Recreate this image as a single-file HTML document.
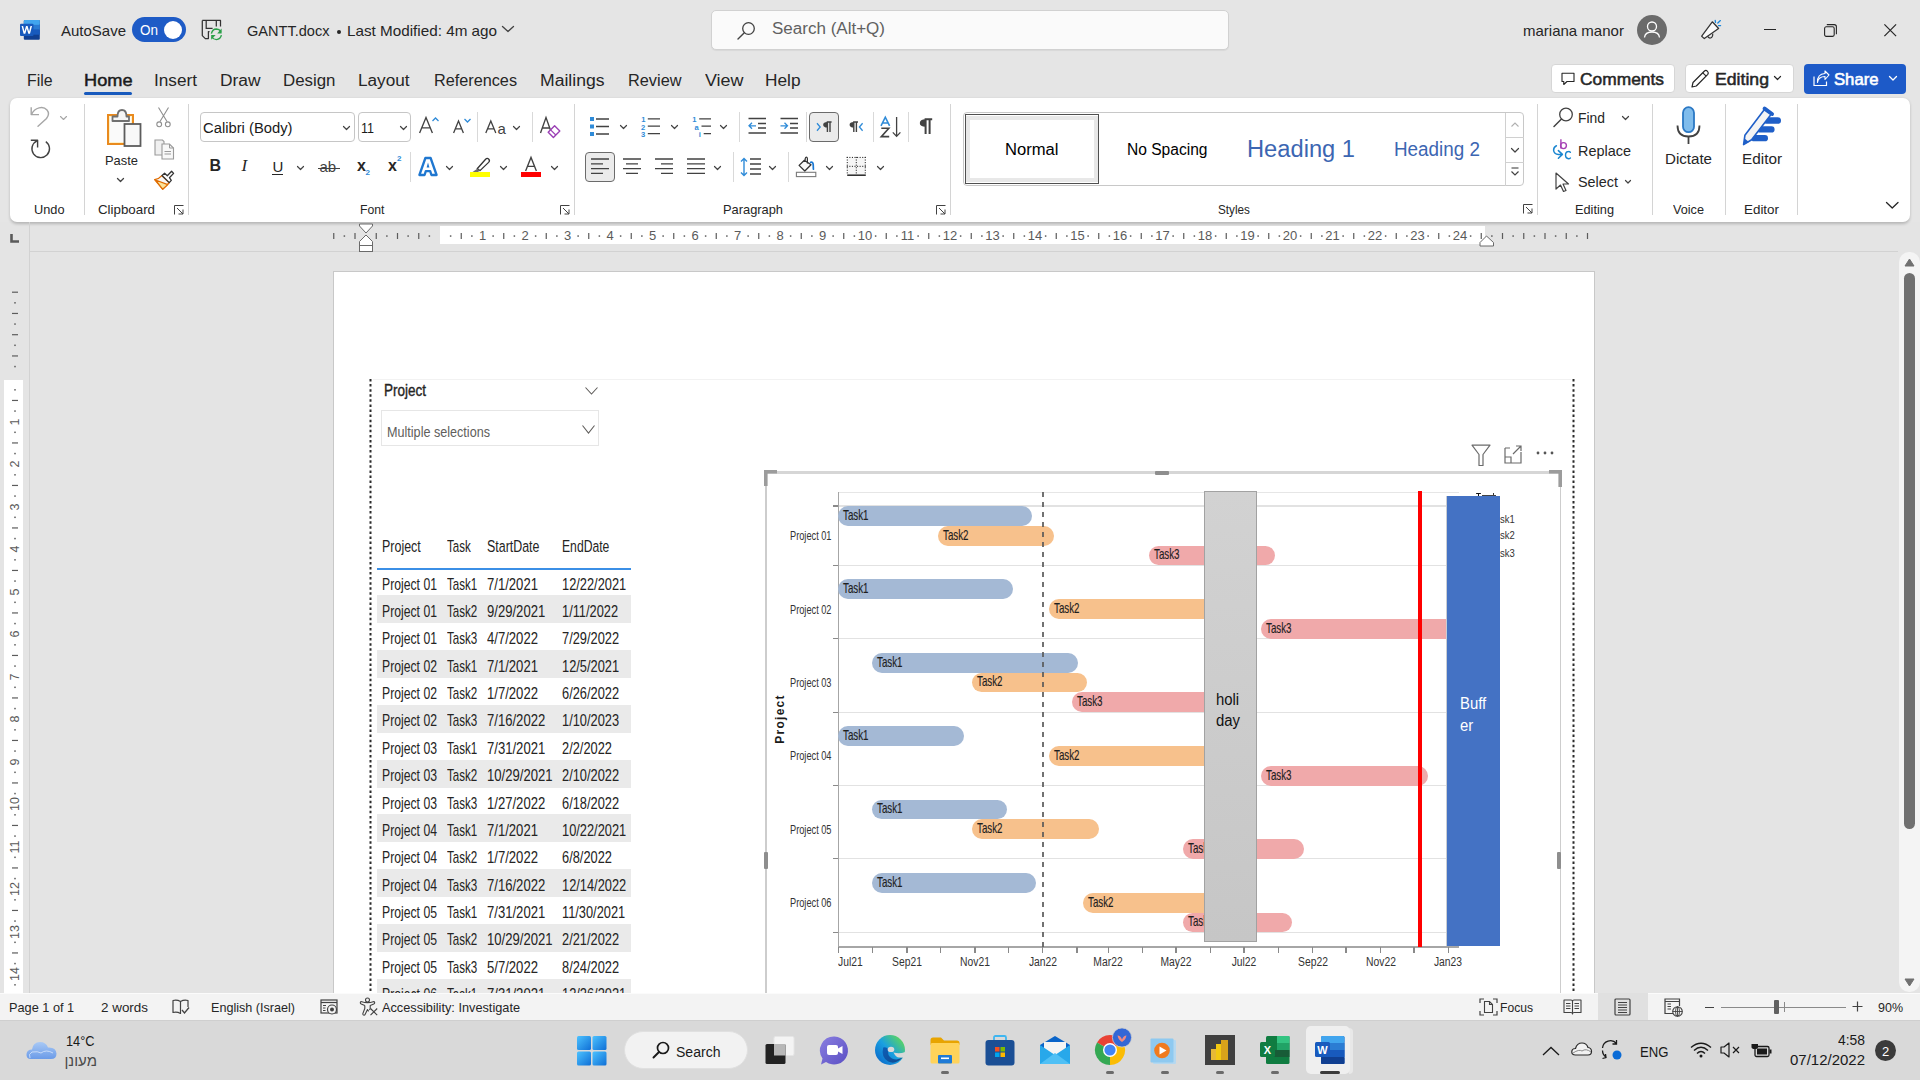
<!DOCTYPE html>
<html><head><meta charset="utf-8"><title>GANTT.docx - Word</title>
<style>
*{margin:0;padding:0;box-sizing:border-box}
html,body{width:1920px;height:1080px;overflow:hidden;background:#e5e5e5;font-family:"Liberation Sans", sans-serif;position:relative}
.t{position:absolute;white-space:nowrap}
.r{position:absolute}
svg.r{overflow:visible}
</style></head><body>
<svg class="r" style="left:16px;top:16px;" width="28" height="28" viewBox="0 0 28 28">
      <rect x="7.8" y="3.9" width="16" height="19.8" rx="1" fill="#103f91"/>
      <rect x="7.8" y="3.9" width="16" height="5" rx="1" fill="#41a5ee"/>
      <rect x="7.8" y="8.8" width="16" height="5" fill="#2b7cd3"/>
      <rect x="7.8" y="13.7" width="16" height="5" fill="#185abd"/>
      <rect x="4" y="7.8" width="13.5" height="12.2" rx="1" fill="#185abd"/>
      <path d="M5.6 10 L7.6 17.8 H9.3 L10.8 12.4 L12.3 17.8 H14 L16 10 H14.5 L13.1 15.6 L11.6 10 H10 L8.5 15.6 L7.1 10 Z" fill="#fff"/></svg>
<svg class="r" style="left:198px;top:16px;" width="28" height="28" viewBox="0 0 28 28">
      <path d="M4.3 4.4 H22.5 V10.6 M4.3 4.4 V19.6 L7.3 22.6 H10.4 V15.6 H11.5" fill="none" stroke="#333" stroke-width="1.25" stroke-linejoin="round"/>
      <path d="M8.2 4.4 V12.3 H14.6 M18.3 4.4 V10.6" fill="none" stroke="#333" stroke-width="1.25"/>
      <path d="M13.4 17.6 Q14.5 13.1 18.4 13 Q21.2 13 23 15.6" fill="none" stroke="#2aa048" stroke-width="1.4"/>
      <path d="M23.6 12.4 V17.6 H19.2 Z" fill="#2aa048"/>
      <path d="M23.4 19.2 Q22.3 23.5 18.4 23.6 Q15.4 23.6 13.8 21" fill="none" stroke="#2aa048" stroke-width="1.4"/>
      <path d="M13.2 23.8 V19.1 H17.6 Z" fill="#2aa048"/></svg>
<div class="t" style="left:61.00px;top:23.30px;font-size:15px;line-height:15px;color:#262626;">AutoSave</div>
<div class="r" style="left:132px;top:17px;width:54px;height:25px;background:#1e5bc6;border-radius:13px;"></div>
<div class="t" style="left:140.00px;top:23.23px;font-size:14.5px;line-height:14.5px;color:#ffffff;transform:scaleX(0.930525601570262);transform-origin:left center;">On</div>
<div class="r" style="left:164px;top:21px;width:18px;height:18px;background:#ffffff;border-radius:50%;"></div>
<div class="t" style="left:247.00px;top:23.30px;font-size:15px;line-height:15px;color:#262626;transform:scaleX(0.9703652653342523);transform-origin:left center;">GANTT.docx</div>
<div class="r" style="left:336.5px;top:29.5px;width:4px;height:4px;background:#262626;border-radius:50%;"></div>
<div class="t" style="left:347.00px;top:23.30px;font-size:15px;line-height:15px;color:#262626;transform:scaleX(1.0163731359875494);transform-origin:left center;">Last Modified: 4m ago</div>
<svg class="r" style="left:502px;top:26px;" width="12" height="6" viewBox="0 0 12 6"><polyline points="0.5,0.5 6.0,5.5 11.5,0.5" fill="none" stroke="#424242" stroke-width="1.3" stroke-linecap="round" stroke-linejoin="round"/></svg>
<div class="r" style="left:711px;top:10px;width:518px;height:40px;background:#fafafa;border:1px solid #d1d1d1;border-radius:5px;box-shadow:0 1px 1px rgba(0,0,0,0.06);"></div>
<svg class="r" style="left:737px;top:21px;" width="19" height="19" viewBox="0 0 19 19"><circle cx="11.5" cy="7.5" r="5.8" fill="none" stroke="#424242" stroke-width="1.3"/><line x1="7.3" y1="11.8" x2="1" y2="18" stroke="#424242" stroke-width="1.4" stroke-linecap="round"/></svg>
<div class="t" style="left:771.50px;top:21.46px;font-size:16px;line-height:16px;color:#616161;transform:scaleX(1.0634293242988895);transform-origin:left center;">Search (Alt+Q)</div>
<div class="t" style="left:1523.00px;top:23.30px;font-size:15px;line-height:15px;color:#262626;">mariana manor</div>
<svg class="r" style="left:1637px;top:15px;" width="30" height="30" viewBox="0 0 30 30"><circle cx="15" cy="15" r="15" fill="#6b6b6b"/><circle cx="15" cy="11.5" r="4.5" fill="none" stroke="#fff" stroke-width="1.3"/><path d="M7.5 22.5 Q8 17 15 17 Q22 17 22.5 22.5" fill="none" stroke="#fff" stroke-width="1.3"/></svg>
<svg class="r" style="left:1695px;top:12px;" width="35" height="35" viewBox="0 0 35 35"><path d="M17.3 9.8 L23.6 16.5 L9.3 26.6 L6.7 24.2 Z" fill="#fafafa" stroke="#333" stroke-width="1.25" stroke-linejoin="round"/><path d="M12.6 24.3 Q13.5 26.3 15.5 26 Q18 25.3 17.7 21.6" fill="none" stroke="#333" stroke-width="1.2"/><path d="M20.2 8.3 L20.5 10.4 M22.8 11 L25.4 8.6 M23.5 13.6 L25.6 13.6" stroke="#1a86d9" stroke-width="1.3" stroke-linecap="round"/></svg>
<div class="r" style="left:1764px;top:29px;width:12px;height:1.2px;background:#262626;"></div>
<svg class="r" style="left:1823.5px;top:23.5px;" width="13" height="13" viewBox="0 0 13 13"><rect x="0.6" y="2.8" width="9.6" height="9.6" rx="1.6" fill="none" stroke="#262626" stroke-width="1.1"/><path d="M2.8 0.6 H10.2 Q12.4 0.6 12.4 2.8 V10.2" fill="none" stroke="#262626" stroke-width="1.1"/></svg>
<svg class="r" style="left:1884px;top:24px;" width="12.5" height="12.5" viewBox="0 0 12.5 12.5"><path d="M0.4 0.4 L12.1 12.1 M12.1 0.4 L0.4 12.1" stroke="#262626" stroke-width="1.2"/></svg>
<div class="t" style="left:27.00px;top:73.46px;font-size:16px;line-height:16px;color:#262626;transform:scaleX(0.9890429554930671);transform-origin:left center;">File</div>
<div class="t" style="left:83.50px;top:73.46px;font-size:16px;line-height:16px;color:#1a1a1a;transform:scaleX(1.1363636363636365);transform-origin:left center;-webkit-text-stroke:0.45px #1a1a1a;">Home</div>
<div class="t" style="left:154.00px;top:73.46px;font-size:16px;line-height:16px;color:#262626;transform:scaleX(1.0745298931717373);transform-origin:left center;">Insert</div>
<div class="t" style="left:219.80px;top:73.46px;font-size:16px;line-height:16px;color:#262626;transform:scaleX(1.0847003682624707);transform-origin:left center;">Draw</div>
<div class="t" style="left:283.00px;top:73.46px;font-size:16px;line-height:16px;color:#262626;transform:scaleX(1.0541110330288124);transform-origin:left center;">Design</div>
<div class="t" style="left:357.50px;top:73.46px;font-size:16px;line-height:16px;color:#262626;transform:scaleX(1.0720233139050792);transform-origin:left center;">Layout</div>
<div class="t" style="left:434.00px;top:73.46px;font-size:16px;line-height:16px;color:#262626;transform:scaleX(1.014390907146567);transform-origin:left center;">References</div>
<div class="t" style="left:539.50px;top:73.46px;font-size:16px;line-height:16px;color:#262626;transform:scaleX(1.099041533546326);transform-origin:left center;">Mailings</div>
<div class="t" style="left:627.50px;top:73.46px;font-size:16px;line-height:16px;color:#262626;transform:scaleX(1.0197760304979748);transform-origin:left center;">Review</div>
<div class="t" style="left:704.50px;top:73.46px;font-size:16px;line-height:16px;color:#262626;transform:scaleX(1.1194301083084977);transform-origin:left center;">View</div>
<div class="t" style="left:764.50px;top:73.46px;font-size:16px;line-height:16px;color:#262626;transform:scaleX(1.0787814328040721);transform-origin:left center;">Help</div>
<div class="r" style="left:84px;top:92px;width:48px;height:3px;background:#185abd;border-radius:2px;"></div>
<div class="r" style="left:1551px;top:64px;width:124px;height:29px;background:#ffffff;border:1px solid #d6d6d6;border-radius:4px;"></div>
<svg class="r" style="left:1561px;top:72px;" width="14" height="14" viewBox="0 0 14 14"><path d="M1 1.2 H13 V9.5 H6 L2.8 12.5 V9.5 H1 Z" fill="none" stroke="#262626" stroke-width="1.1" stroke-linejoin="round"/></svg>
<div class="t" style="left:1579.50px;top:71.03px;font-size:16.5px;line-height:16.5px;color:#262626;transform:scaleX(1.0530305478755755);transform-origin:left center;-webkit-text-stroke:0.5px #262626;">Comments</div>
<div class="r" style="left:1685px;top:64px;width:109px;height:29px;background:#ffffff;border:1px solid #d6d6d6;border-radius:4px;"></div>
<svg class="r" style="left:1690px;top:69px;" width="20" height="20" viewBox="0 0 20 20"><path d="M2 18 L3 13.5 L14.5 2 Q16 0.8 17.5 2.3 Q19 3.8 17.8 5.3 L6.3 17 Z" fill="none" stroke="#262626" stroke-width="1.2" stroke-linejoin="round"/><path d="M12.8 3.8 L16.2 7.2" stroke="#262626" stroke-width="1.1"/></svg>
<div class="t" style="left:1714.50px;top:71.03px;font-size:16.5px;line-height:16.5px;color:#262626;transform:scaleX(1.0703385224311177);transform-origin:left center;-webkit-text-stroke:0.5px #262626;">Editing</div>
<svg class="r" style="left:1774px;top:76px;" width="7" height="4" viewBox="0 0 7 4"><polyline points="0.5,0.5 3.5,3.5 6.5,0.5" fill="none" stroke="#262626" stroke-width="1.2" stroke-linecap="round" stroke-linejoin="round"/></svg>
<div class="r" style="left:1804px;top:64px;width:102px;height:30px;background:#1d5ac8;border-radius:4px;"></div>
<svg class="r" style="left:1813px;top:70px;" width="16" height="17" viewBox="0 0 16 17"><path d="M1 6.5 V15.5 H13.5 V11.5" fill="none" stroke="#fff" stroke-width="1.2"/><path d="M4.5 12.5 Q5.5 6.5 12 6.5 V9.5 L16 5 L12 1 V3.5 Q4 4 4.5 12.5 Z" fill="none" stroke="#fff" stroke-width="1.1" stroke-linejoin="round"/></svg>
<div class="t" style="left:1834.00px;top:71.03px;font-size:16.5px;line-height:16.5px;color:#ffffff;transform:scaleX(1.0106332958958992);transform-origin:left center;-webkit-text-stroke:0.6px #ffffff;">Share</div>
<svg class="r" style="left:1889px;top:76px;" width="8" height="4.5" viewBox="0 0 8 4.5"><polyline points="0.5,0.5 4.0,4.0 7.5,0.5" fill="none" stroke="#ffffff" stroke-width="1.3" stroke-linecap="round" stroke-linejoin="round"/></svg>
<div class="r" style="left:0px;top:222px;width:1920px;height:771px;background:#e4e4e4;"></div>
<div class="r" style="left:10px;top:98px;width:1900px;height:124px;background:#ffffff;border-radius:7px;box-shadow:0 1.5px 3px rgba(0,0,0,0.2);"></div>
<div class="r" style="left:84.1px;top:104px;width:1px;height:111px;background:#d4d4d4;"></div>
<div class="r" style="left:188.0px;top:104px;width:1px;height:111px;background:#d4d4d4;"></div>
<div class="r" style="left:574.0px;top:104px;width:1px;height:111px;background:#d4d4d4;"></div>
<div class="r" style="left:950.0px;top:104px;width:1px;height:111px;background:#d4d4d4;"></div>
<div class="r" style="left:1537.0px;top:104px;width:1px;height:111px;background:#d4d4d4;"></div>
<div class="r" style="left:1651.9px;top:104px;width:1px;height:111px;background:#d4d4d4;"></div>
<div class="r" style="left:1725.0px;top:104px;width:1px;height:111px;background:#d4d4d4;"></div>
<div class="r" style="left:1797.3px;top:104px;width:1px;height:111px;background:#d4d4d4;"></div>
<div class="t" style="left:33.50px;top:203.00px;font-size:13px;line-height:13px;color:#262626;transform:scaleX(0.9813976872800402);transform-origin:left center;">Undo</div>
<div class="t" style="left:97.50px;top:203.00px;font-size:13px;line-height:13px;color:#262626;transform:scaleX(1.0243680536445376);transform-origin:left center;">Clipboard</div>
<div class="t" style="left:359.50px;top:203.00px;font-size:13px;line-height:13px;color:#262626;transform:scaleX(0.941792649452523);transform-origin:left center;">Font</div>
<div class="t" style="left:722.50px;top:203.00px;font-size:13px;line-height:13px;color:#262626;transform:scaleX(0.9883050568275408);transform-origin:left center;">Paragraph</div>
<div class="t" style="left:1217.50px;top:203.00px;font-size:13px;line-height:13px;color:#262626;transform:scaleX(0.9010623320107539);transform-origin:left center;">Styles</div>
<div class="t" style="left:1575.00px;top:203.00px;font-size:13px;line-height:13px;color:#262626;transform:scaleX(0.9811436455618581);transform-origin:left center;">Editing</div>
<div class="t" style="left:1673.00px;top:203.00px;font-size:13px;line-height:13px;color:#262626;transform:scaleX(0.9747421895342953);transform-origin:left center;">Voice</div>
<div class="t" style="left:1744.00px;top:203.00px;font-size:13px;line-height:13px;color:#262626;transform:scaleX(1.030610038325811);transform-origin:left center;">Editor</div>
<svg class="r" style="left:174px;top:205px;" width="10" height="10" viewBox="0 0 10 10"><path d="M0.5 9.5 V0.5 H9.5" fill="none" stroke="#424242" stroke-width="1"/><path d="M3 3 L9 9 M9 4.5 V9 H4.5" fill="none" stroke="#424242" stroke-width="1"/></svg>
<svg class="r" style="left:560px;top:205px;" width="10" height="10" viewBox="0 0 10 10"><path d="M0.5 9.5 V0.5 H9.5" fill="none" stroke="#424242" stroke-width="1"/><path d="M3 3 L9 9 M9 4.5 V9 H4.5" fill="none" stroke="#424242" stroke-width="1"/></svg>
<svg class="r" style="left:936px;top:205px;" width="10" height="10" viewBox="0 0 10 10"><path d="M0.5 9.5 V0.5 H9.5" fill="none" stroke="#424242" stroke-width="1"/><path d="M3 3 L9 9 M9 4.5 V9 H4.5" fill="none" stroke="#424242" stroke-width="1"/></svg>
<svg class="r" style="left:1523px;top:204px;" width="10" height="10" viewBox="0 0 10 10"><path d="M0.5 9.5 V0.5 H9.5" fill="none" stroke="#424242" stroke-width="1"/><path d="M3 3 L9 9 M9 4.5 V9 H4.5" fill="none" stroke="#424242" stroke-width="1"/></svg>
<svg class="r" style="left:1885.5px;top:201.5px;" width="12.5" height="6.5" viewBox="0 0 12.5 6.5"><polyline points="0.5,0.5 6.25,6.0 12.0,0.5" fill="none" stroke="#262626" stroke-width="1.3" stroke-linecap="round" stroke-linejoin="round"/></svg>
<svg class="r" style="left:30px;top:106px;" width="20" height="21" viewBox="0 0 20 21"><path d="M1.2 1.2 V8.6 H9" fill="none" stroke="#a6a6a6" stroke-width="1.4" stroke-linejoin="round"/><path d="M1.6 8.2 C5 1.5 13 -0.5 17 4 C19.5 7 18.5 10 16.5 12.5 L8 20.3" fill="none" stroke="#a6a6a6" stroke-width="1.4" stroke-linecap="round"/></svg>
<svg class="r" style="left:60px;top:116px;" width="7" height="4" viewBox="0 0 7 4"><polyline points="0.5,0.5 3.5,3.5 6.5,0.5" fill="none" stroke="#a6a6a6" stroke-width="1.1" stroke-linecap="round" stroke-linejoin="round"/></svg>
<svg class="r" style="left:30px;top:139px;" width="21" height="21" viewBox="0 0 21 21"><path d="M0.8 1.2 H7.6 V8.6" fill="none" stroke="#424242" stroke-width="1.4" stroke-linejoin="round"/><path d="M7 1.8 A8.8 8.8 0 1 0 15.8 2.6" fill="none" stroke="#424242" stroke-width="1.4"/></svg>
<svg class="r" style="left:107px;top:107px;" width="35" height="40" viewBox="0 0 35 40">
      <rect x="1" y="8" width="25" height="29" fill="#fdf0c8" stroke="#e98a1e" stroke-width="2"/>
      <rect x="3" y="10" width="21" height="25" fill="#fafafa"/>
      <path d="M5.5 14 V9.5 H10.5 Q10.5 3 15 3 Q19.5 3 19.5 9.5 H22 V14 Z" fill="#f5f5f5" stroke="#707070" stroke-width="1.8" stroke-linejoin="round"/>
      <rect x="17.5" y="17" width="16" height="22" fill="#f8f8f8" stroke="#5c5c5c" stroke-width="1.8"/></svg>
<div class="t" style="left:104.50px;top:153.57px;font-size:13.5px;line-height:13.5px;color:#262626;transform:scaleX(0.9559113066384239);transform-origin:left center;">Paste</div>
<svg class="r" style="left:117px;top:178px;" width="7" height="4" viewBox="0 0 7 4"><polyline points="0.5,0.5 3.5,3.5 6.5,0.5" fill="none" stroke="#424242" stroke-width="1.3" stroke-linecap="round" stroke-linejoin="round"/></svg>
<svg class="r" style="left:156px;top:107px;" width="15" height="21" viewBox="0 0 15 21"><path d="M2.5 0.5 L11 14.5 M12.5 0.5 L4 14.5" stroke="#8f8f8f" stroke-width="1.1"/><circle cx="3.2" cy="17.3" r="2.4" fill="none" stroke="#8f8f8f" stroke-width="1.1"/><circle cx="11.8" cy="17.3" r="2.4" fill="none" stroke="#8f8f8f" stroke-width="1.1"/></svg>
<svg class="r" style="left:154px;top:139px;" width="21" height="21" viewBox="0 0 21 21"><path d="M1 1 H8.5 L10 2.5 V16 H1 Z" fill="#f0f0f0" stroke="#9a9a9a" stroke-width="1.1"/><path d="M8 5 H15.5 L19.5 9 V20 H8 Z" fill="#f8f8f8" stroke="#9a9a9a" stroke-width="1.1"/><path d="M15.5 5 V9 H19.5" fill="none" stroke="#9a9a9a" stroke-width="1"/><path d="M10.5 12.5 H17 M10.5 15 H17" stroke="#9a9a9a" stroke-width="1"/></svg>
<svg class="r" style="left:150px;top:166px;" width="30" height="30" viewBox="0 0 30 30"><path d="M11.8 9.6 Q9 13 4.6 13.7 L12.6 23.2 L19.2 16.8 Z" fill="#f8f8f8" stroke="#e06c00" stroke-width="1.3" stroke-linejoin="round"/><path d="M5.5 14 L17.8 18.6 L12.6 23.2 Z" fill="#fbe39b" stroke="#e06c00" stroke-width="1.2" stroke-linejoin="round"/><path d="M12 9.5 L14.6 7.3 L17.3 9.7 L21.6 5.3 L23.6 7.4 L19.4 11.7 L21.3 14.4 L19.3 16.6 Z" fill="#fff" stroke="#333" stroke-width="1.3" stroke-linejoin="round"/></svg>
<div class="r" style="left:199.6px;top:112.2px;width:155px;height:29.5px;background:#ffffff;border:1px solid #c6c6c6;border-radius:4px;"></div>
<div class="t" style="left:202.50px;top:119.88px;font-size:15.5px;line-height:15.5px;color:#1a1a1a;transform:scaleX(0.9532796447835067);transform-origin:left center;">Calibri (Body)</div>
<svg class="r" style="left:343px;top:126px;" width="7" height="4" viewBox="0 0 7 4"><polyline points="0.5,0.5 3.5,3.5 6.5,0.5" fill="none" stroke="#424242" stroke-width="1.2" stroke-linecap="round" stroke-linejoin="round"/></svg>
<div class="r" style="left:357.5px;top:112.2px;width:53px;height:29.5px;background:#ffffff;border:1px solid #c6c6c6;border-radius:4px;"></div>
<div class="t" style="left:361.00px;top:119.88px;font-size:15.5px;line-height:15.5px;color:#1a1a1a;transform:scaleX(0.8079081781282166);transform-origin:left center;">11</div>
<svg class="r" style="left:400px;top:126px;" width="7" height="4" viewBox="0 0 7 4"><polyline points="0.5,0.5 3.5,3.5 6.5,0.5" fill="none" stroke="#424242" stroke-width="1.2" stroke-linecap="round" stroke-linejoin="round"/></svg>
<svg class="r" style="left:410px;top:108px;" width="160" height="74" viewBox="0 0 160 74"><path d="M9.6 25 L16 9.6 L22.4 25 M11.8 19.9 H20.2" fill="none" stroke="#424242" stroke-width="1.35"/><path d="M43.6 25 L48.5 13 L53.4 25 M45.3 20.8 H51.7" fill="none" stroke="#424242" stroke-width="1.3"/><path d="M75.8 25 L80.8 13 L85.8 25 M77.5 20.8 H84.1" fill="none" stroke="#424242" stroke-width="1.3"/><path d="M130.5 25 L136 9.6 L141.5 25 M132.4 20 H139.6" fill="none" stroke="#424242" stroke-width="1.35"/><path d="M115.6 63 L121 49.4 L126.4 63 M117.5 58.3 H124.5" fill="none" stroke="#424242" stroke-width="1.35"/><path d="M9.4 67 L15.4 50 H20.6 L26.6 67 H21.4 L20.2 63.2 H15.8 L14.6 67 Z" fill="#fff" stroke="#1f77d0" stroke-width="2.3" stroke-linejoin="round"/><path d="M16.6 59.6 L18 54.6 L19.4 59.6 Z" fill="#1f77d0"/></svg>
<svg class="r" style="left:432px;top:117px;" width="7" height="5" viewBox="0 0 7 5"><polyline points="0.5,4 3.5,1 6.5,4" fill="none" stroke="#2f8bd8" stroke-width="1.3"/></svg>
<svg class="r" style="left:464px;top:118px;" width="7" height="5" viewBox="0 0 7 5"><polyline points="0.5,1 3.5,4 6.5,1" fill="none" stroke="#2f8bd8" stroke-width="1.3"/></svg>
<div class="r" style="left:477.2px;top:112px;width:1px;height:30px;background:#d9d9d9;"></div>
<div class="t" style="left:497.50px;top:120.60px;font-size:15px;line-height:15px;color:#424242;">a</div>
<svg class="r" style="left:513px;top:126px;" width="7" height="4" viewBox="0 0 7 4"><polyline points="0.5,0.5 3.5,3.5 6.5,0.5" fill="none" stroke="#424242" stroke-width="1.2" stroke-linecap="round" stroke-linejoin="round"/></svg>
<div class="r" style="left:532.0px;top:112px;width:1px;height:30px;background:#d9d9d9;"></div>
<svg class="r" style="left:547px;top:124px;" width="14" height="14" viewBox="0 0 14 14"><path d="M1.2 8.2 L7.6 1.8 L12.8 7 L6.4 13.4 Z" fill="#fff" stroke="#9b3fb5" stroke-width="1.4" stroke-linejoin="round"/><path d="M3.6 5.8 L8.8 11" stroke="#9b3fb5" stroke-width="1.2"/></svg>
<div class="t" style="left:209.50px;top:157.96px;font-size:16px;line-height:16px;color:#262626;font-weight:700;">B</div>
<div class="t" style="left:241.50px;top:157.11px;font-size:17px;line-height:17px;color:#262626;font-family:'Liberation Serif', serif;font-style:italic;">I</div>
<div class="t" style="left:272.50px;top:158.80px;font-size:15px;line-height:15px;color:#262626;">U</div>
<div class="r" style="left:272px;top:174px;width:11px;height:1.3px;background:#262626;"></div>
<svg class="r" style="left:297px;top:166px;" width="7" height="4" viewBox="0 0 7 4"><polyline points="0.5,0.5 3.5,3.5 6.5,0.5" fill="none" stroke="#424242" stroke-width="1.2" stroke-linecap="round" stroke-linejoin="round"/></svg>
<div class="t" style="left:319.50px;top:158.80px;font-size:15px;line-height:15px;color:#424242;">ab</div>
<div class="r" style="left:318px;top:167.5px;width:22px;height:1.1px;background:#424242;"></div>
<div class="t" style="left:357.00px;top:157.96px;font-size:16px;line-height:16px;color:#262626;font-weight:700;">x</div>
<div class="t" style="left:365.50px;top:169.23px;font-size:8px;line-height:8px;color:#2f8bd8;font-weight:700;">2</div>
<div class="t" style="left:388.00px;top:157.96px;font-size:16px;line-height:16px;color:#262626;font-weight:700;">x</div>
<div class="t" style="left:397.00px;top:155.23px;font-size:8px;line-height:8px;color:#2f8bd8;font-weight:700;">2</div>
<div class="r" style="left:410.0px;top:152px;width:1px;height:30px;background:#d9d9d9;"></div>
<svg class="r" style="left:446px;top:166px;" width="7" height="4" viewBox="0 0 7 4"><polyline points="0.5,0.5 3.5,3.5 6.5,0.5" fill="none" stroke="#424242" stroke-width="1.2" stroke-linecap="round" stroke-linejoin="round"/></svg>
<svg class="r" style="left:470px;top:156px;" width="21" height="22" viewBox="0 0 21 22"><path d="M7.2 12.8 L15.6 3.2 Q17.2 1.6 18.8 3.2 Q20.2 4.8 18.6 6.4 L10 14.6 Z" fill="#fff" stroke="#333" stroke-width="1.3" stroke-linejoin="round"/><path d="M7.2 12.8 L10 14.6 L8 16 L2.2 16.3 Z" fill="#6e6e6e"/><rect x="0" y="16" width="20" height="5" fill="#ffff00"/></svg>
<svg class="r" style="left:500px;top:166px;" width="7" height="4" viewBox="0 0 7 4"><polyline points="0.5,0.5 3.5,3.5 6.5,0.5" fill="none" stroke="#424242" stroke-width="1.2" stroke-linecap="round" stroke-linejoin="round"/></svg>
<div class="r" style="left:521px;top:172px;width:20px;height:5px;background:#ff0000;"></div>
<svg class="r" style="left:551px;top:166px;" width="7" height="4" viewBox="0 0 7 4"><polyline points="0.5,0.5 3.5,3.5 6.5,0.5" fill="none" stroke="#424242" stroke-width="1.2" stroke-linecap="round" stroke-linejoin="round"/></svg>
<svg class="r" style="left:589px;top:116px;" width="22" height="20" viewBox="0 0 22 20"><rect x="1" y="1" width="4" height="4" fill="#2f8bd8"/><rect x="1" y="8.5" width="4" height="4" fill="#2f8bd8"/><rect x="1" y="16" width="4" height="4" fill="#2f8bd8"/><path d="M7 3 H20 M7 10.5 H20 M7 18 H20" stroke="#424242" stroke-width="1.3"/></svg>
<svg class="r" style="left:620px;top:125px;" width="7" height="4" viewBox="0 0 7 4"><polyline points="0.5,0.5 3.5,3.5 6.5,0.5" fill="none" stroke="#424242" stroke-width="1.2" stroke-linecap="round" stroke-linejoin="round"/></svg>
<svg class="r" style="left:640px;top:115px;" width="22" height="22" viewBox="0 0 22 22"><text x="1.3" y="7.3" font-size="7.6" font-weight="700" fill="#2f8bd8" font-family="Liberation Sans">1</text><text x="1" y="14.8" font-size="7.6" font-weight="700" fill="#2f8bd8" font-family="Liberation Sans">2</text><text x="1" y="22.3" font-size="7.6" font-weight="700" fill="#2f8bd8" font-family="Liberation Sans">3</text><path d="M7.8 3.8 H20 M7.8 11.2 H20 M7.8 18.6 H20" stroke="#424242" stroke-width="1.3"/></svg>
<svg class="r" style="left:671px;top:125px;" width="7" height="4" viewBox="0 0 7 4"><polyline points="0.5,0.5 3.5,3.5 6.5,0.5" fill="none" stroke="#424242" stroke-width="1.2" stroke-linecap="round" stroke-linejoin="round"/></svg>
<svg class="r" style="left:691px;top:115px;" width="22" height="22" viewBox="0 0 22 22"><text x="1.2" y="7.3" font-size="7.6" font-weight="700" fill="#2f8bd8" font-family="Liberation Sans">1</text><text x="3.6" y="14.8" font-size="7.6" font-weight="700" fill="#2f8bd8" font-family="Liberation Sans">a</text><text x="7.8" y="22.3" font-size="7.6" font-weight="700" fill="#2f8bd8" font-family="Liberation Sans">i</text><path d="M8.2 3.8 H20 M10.5 11.2 H20 M12.7 18.6 H20" stroke="#424242" stroke-width="1.3"/></svg>
<svg class="r" style="left:720px;top:125px;" width="7" height="4" viewBox="0 0 7 4"><polyline points="0.5,0.5 3.5,3.5 6.5,0.5" fill="none" stroke="#424242" stroke-width="1.2" stroke-linecap="round" stroke-linejoin="round"/></svg>
<div class="r" style="left:739.0px;top:112px;width:1px;height:30px;background:#d9d9d9;"></div>
<svg class="r" style="left:748px;top:117px;" width="19" height="18" viewBox="0 0 19 18"><path d="M0.5 1.5 H18 M10 6.5 H18 M10 11 H18 M0.5 16 H18" stroke="#424242" stroke-width="1.3"/><path d="M8 8.8 H1 M4 5.8 L1 8.8 L4 11.8" fill="none" stroke="#2f8bd8" stroke-width="1.3"/></svg>
<svg class="r" style="left:780px;top:117px;" width="19" height="18" viewBox="0 0 19 18"><path d="M0.5 1.5 H18 M10 6.5 H18 M10 11 H18 M0.5 16 H18" stroke="#424242" stroke-width="1.3"/><path d="M0.5 8.8 H7.5 M4.5 5.8 L7.5 8.8 L4.5 11.8" fill="none" stroke="#2f8bd8" stroke-width="1.3"/></svg>
<div class="r" style="left:806.0px;top:112px;width:1px;height:30px;background:#d9d9d9;"></div>
<div class="r" style="left:809px;top:112px;width:30px;height:30px;background:#ebebeb;border:1px solid #6b6b6b;border-radius:4px;"></div>
<svg class="r" style="left:740px;top:108px;" width="200" height="34" viewBox="0 0 200 34"><path d="M77 15.3 L80.2 19 L77 22.7" fill="none" stroke="#2f8bd8" stroke-width="1.3"/><path d="M87.4 24 V14 H91.6 M90 14 V24" fill="none" stroke="#424242" stroke-width="1.4"/><path d="M87.4 14 Q83.2 14 83.2 16.8 Q83.2 19.6 87.4 19.6 Z" fill="#424242"/><path d="M113.8 24 V14 H118 M116.4 14 V24" fill="none" stroke="#424242" stroke-width="1.4"/><path d="M113.8 14 Q109.6 14 109.6 16.8 Q109.6 19.6 113.8 19.6 Z" fill="#424242"/><path d="M122.6 15.3 L119.4 19 L122.6 22.7" fill="none" stroke="#2f8bd8" stroke-width="1.3"/><path d="M141 17.8 L145.3 9.2 L149.6 17.8 M142.5 15 H148.1" fill="none" stroke="#2f8bd8" stroke-width="1.6"/><path d="M141.3 20.3 H148.8 L141.3 28.6 H149.2" fill="none" stroke="#424242" stroke-width="1.6"/><path d="M156.6 9 V28.4 M152.8 24.4 L156.6 28.4 L160.4 24.4" fill="none" stroke="#424242" stroke-width="1.3"/><path d="M185.6 26 V11.2 H192.2 M189.6 11.2 V26" fill="none" stroke="#424242" stroke-width="2"/><path d="M185.6 11.2 Q179.8 11.2 179.8 15 Q179.8 18.8 185.6 18.8 Z" fill="#424242"/></svg>
<div class="r" style="left:873.0px;top:112px;width:1px;height:30px;background:#d9d9d9;"></div>
<div class="r" style="left:908.0px;top:112px;width:1px;height:30px;background:#d9d9d9;"></div>
<div class="r" style="left:585px;top:152px;width:29.5px;height:29.5px;background:#ebebeb;border:1px solid #6b6b6b;border-radius:4px;"></div>
<svg class="r" style="left:590px;top:157px;" width="20" height="20" viewBox="0 0 20 20"><path d="M1 2 H19 M1 6.8 H13 M1 11.6 H19 M1 16.4 H13" stroke="#424242" stroke-width="1.3"/></svg>
<svg class="r" style="left:622px;top:157px;" width="20" height="20" viewBox="0 0 20 20"><path d="M1 2 H19 M4 6.8 H16 M1 11.6 H19 M4 16.4 H16" stroke="#424242" stroke-width="1.3"/></svg>
<svg class="r" style="left:654px;top:157px;" width="20" height="20" viewBox="0 0 20 20"><path d="M1 2 H19 M7 6.8 H19 M1 11.6 H19 M7 16.4 H19" stroke="#424242" stroke-width="1.3"/></svg>
<svg class="r" style="left:686px;top:157px;" width="20" height="20" viewBox="0 0 20 20"><path d="M1 2 H19 M1 6.8 H19 M1 11.6 H19 M1 16.4 H19" stroke="#424242" stroke-width="1.3"/></svg>
<svg class="r" style="left:714px;top:166px;" width="7" height="4" viewBox="0 0 7 4"><polyline points="0.5,0.5 3.5,3.5 6.5,0.5" fill="none" stroke="#424242" stroke-width="1.2" stroke-linecap="round" stroke-linejoin="round"/></svg>
<div class="r" style="left:733.0px;top:152px;width:1px;height:30px;background:#d9d9d9;"></div>
<svg class="r" style="left:740px;top:157px;" width="22" height="20" viewBox="0 0 22 20"><path d="M4 1.5 V18.5 M1 4.5 L4 1.5 L7 4.5 M1 15.5 L4 18.5 L7 15.5" fill="none" stroke="#2f8bd8" stroke-width="1.4"/><path d="M10 2 H21 M10 7 H21 M10 12 H21 M10 17 H21" stroke="#424242" stroke-width="1.3"/></svg>
<svg class="r" style="left:769px;top:166px;" width="7" height="4" viewBox="0 0 7 4"><polyline points="0.5,0.5 3.5,3.5 6.5,0.5" fill="none" stroke="#424242" stroke-width="1.2" stroke-linecap="round" stroke-linejoin="round"/></svg>
<div class="r" style="left:788.2px;top:152px;width:1px;height:30px;background:#d9d9d9;"></div>
<svg class="r" style="left:790px;top:150px;" width="30" height="30" viewBox="0 0 30 30"><path d="M14.4 10.2 L9.1 15.4 L14.8 21 L21 14.8 Z" fill="#f8f8f8" stroke="#333" stroke-width="1.3" stroke-linejoin="round"/><path d="M17.4 13.6 V8.6 Q17.2 7.2 16.4 7.2 Q15.6 7.2 15.2 8.6 V10.2" fill="none" stroke="#333" stroke-width="1.2"/><path d="M20.6 12.4 Q22.8 11.6 23.2 14.4 L23.4 19.2" fill="none" stroke="#1a78d2" stroke-width="1.7" stroke-linecap="round"/><rect x="6.4" y="22.3" width="19.4" height="4.3" fill="#fff" stroke="#7a7a7a" stroke-width="1.1"/></svg>
<svg class="r" style="left:826px;top:166px;" width="7" height="4" viewBox="0 0 7 4"><polyline points="0.5,0.5 3.5,3.5 6.5,0.5" fill="none" stroke="#424242" stroke-width="1.2" stroke-linecap="round" stroke-linejoin="round"/></svg>
<svg class="r" style="left:790px;top:150px;" width="90" height="30" viewBox="0 0 90 30"><rect x="58" y="8" width="17" height="16" fill="#f6f6f6"/><rect x="56.75" y="6.9" width="1.1" height="1.1" fill="#333"/><rect x="56.75" y="15.8" width="1.1" height="1.1" fill="#333"/><rect x="59.32" y="6.9" width="1.1" height="1.1" fill="#333"/><rect x="59.32" y="15.8" width="1.1" height="1.1" fill="#333"/><rect x="61.89" y="6.9" width="1.1" height="1.1" fill="#333"/><rect x="61.89" y="15.8" width="1.1" height="1.1" fill="#333"/><rect x="64.46" y="6.9" width="1.1" height="1.1" fill="#333"/><rect x="64.46" y="15.8" width="1.1" height="1.1" fill="#333"/><rect x="67.03" y="6.9" width="1.1" height="1.1" fill="#333"/><rect x="67.03" y="15.8" width="1.1" height="1.1" fill="#333"/><rect x="69.60" y="6.9" width="1.1" height="1.1" fill="#333"/><rect x="69.60" y="15.8" width="1.1" height="1.1" fill="#333"/><rect x="72.17" y="6.9" width="1.1" height="1.1" fill="#333"/><rect x="72.17" y="15.8" width="1.1" height="1.1" fill="#333"/><rect x="74.74" y="6.9" width="1.1" height="1.1" fill="#333"/><rect x="74.74" y="15.8" width="1.1" height="1.1" fill="#333"/><rect x="56.75" y="6.90" width="1.1" height="1.1" fill="#333"/><rect x="65.75" y="6.90" width="1.1" height="1.1" fill="#333"/><rect x="74.75" y="6.90" width="1.1" height="1.1" fill="#333"/><rect x="56.75" y="9.47" width="1.1" height="1.1" fill="#333"/><rect x="65.75" y="9.47" width="1.1" height="1.1" fill="#333"/><rect x="74.75" y="9.47" width="1.1" height="1.1" fill="#333"/><rect x="56.75" y="12.04" width="1.1" height="1.1" fill="#333"/><rect x="65.75" y="12.04" width="1.1" height="1.1" fill="#333"/><rect x="74.75" y="12.04" width="1.1" height="1.1" fill="#333"/><rect x="56.75" y="14.61" width="1.1" height="1.1" fill="#333"/><rect x="65.75" y="14.61" width="1.1" height="1.1" fill="#333"/><rect x="74.75" y="14.61" width="1.1" height="1.1" fill="#333"/><rect x="56.75" y="17.18" width="1.1" height="1.1" fill="#333"/><rect x="65.75" y="17.18" width="1.1" height="1.1" fill="#333"/><rect x="74.75" y="17.18" width="1.1" height="1.1" fill="#333"/><rect x="56.75" y="19.75" width="1.1" height="1.1" fill="#333"/><rect x="65.75" y="19.75" width="1.1" height="1.1" fill="#333"/><rect x="74.75" y="19.75" width="1.1" height="1.1" fill="#333"/><rect x="56.75" y="22.32" width="1.1" height="1.1" fill="#333"/><rect x="65.75" y="22.32" width="1.1" height="1.1" fill="#333"/><rect x="74.75" y="22.32" width="1.1" height="1.1" fill="#333"/><rect x="57.2" y="24.4" width="18.6" height="1.6" fill="#333"/></svg>
<svg class="r" style="left:877px;top:166px;" width="7" height="4" viewBox="0 0 7 4"><polyline points="0.5,0.5 3.5,3.5 6.5,0.5" fill="none" stroke="#424242" stroke-width="1.2" stroke-linecap="round" stroke-linejoin="round"/></svg>
<div class="r" style="left:963.3px;top:112.2px;width:560.5px;height:74px;background:#ffffff;border:1px solid #c8c8c8;border-radius:4px;"></div>
<div class="r" style="left:964.5px;top:114.3px;width:134.5px;height:69.5px;background:#ffffff;border:1.5px solid #505050;"></div>
<div class="r" style="left:966px;top:115.8px;width:131.5px;height:66.5px;background:transparent;border:4px solid #e8e8e8;"></div>
<div class="t" style="left:1004.50px;top:142.46px;font-size:16px;line-height:16px;color:#000000;transform:scaleX(1.0375757575757576);transform-origin:left center;">Normal</div>
<div class="t" style="left:1126.50px;top:142.46px;font-size:16px;line-height:16px;color:#000000;transform:scaleX(0.9731624758220503);transform-origin:left center;">No Spacing</div>
<div class="t" style="left:1247.00px;top:137.83px;font-size:23px;line-height:23px;color:#3c66b2;transform:scaleX(1.0299247374153837);transform-origin:left center;font-weight:300;">Heading 1</div>
<div class="t" style="left:1393.50px;top:139.79px;font-size:19.5px;line-height:19.5px;color:#3c66b2;transform:scaleX(0.967327222510745);transform-origin:left center;">Heading 2</div>
<div class="r" style="left:1505.0px;top:113px;width:1px;height:73px;background:#d0d0d0;"></div>
<div class="r" style="left:1505.5px;top:137.3px;width:18px;height:1px;background:#d0d0d0;"></div>
<div class="r" style="left:1505.5px;top:162.3px;width:18px;height:1px;background:#d0d0d0;"></div>
<svg class="r" style="left:1511px;top:122px;" width="8" height="5" viewBox="0 0 8 5"><polyline points="0.5,4.5 4,1 7.5,4.5" fill="none" stroke="#b0b0b0" stroke-width="1.1"/></svg>
<svg class="r" style="left:1511px;top:148px;" width="8" height="4.5" viewBox="0 0 8 4.5"><polyline points="0.5,0.5 4.0,4.0 7.5,0.5" fill="none" stroke="#424242" stroke-width="1.2" stroke-linecap="round" stroke-linejoin="round"/></svg>
<svg class="r" style="left:1511px;top:167px;" width="8" height="10" viewBox="0 0 8 10"><path d="M0.5 1 H7.5" stroke="#424242" stroke-width="1.1"/><polyline points="0.5,4.5 4,8 7.5,4.5" fill="none" stroke="#424242" stroke-width="1.2"/></svg>
<svg class="r" style="left:1553px;top:107px;" width="21" height="21" viewBox="0 0 21 21"><circle cx="13" cy="7.5" r="6.3" fill="none" stroke="#424242" stroke-width="1.3"/><path d="M8.5 12 L1 19.5" stroke="#424242" stroke-width="1.5" stroke-linecap="round"/></svg>
<div class="t" style="left:1578.00px;top:110.30px;font-size:15px;line-height:15px;color:#262626;transform:scaleX(0.9253012048192771);transform-origin:left center;">Find</div>
<svg class="r" style="left:1622px;top:116px;" width="7" height="4" viewBox="0 0 7 4"><polyline points="0.5,0.5 3.5,3.5 6.5,0.5" fill="none" stroke="#424242" stroke-width="1.2" stroke-linecap="round" stroke-linejoin="round"/></svg>
<svg class="r" style="left:1548px;top:136px;" width="28" height="28" viewBox="0 0 28 28"><path d="M12.9 3.2 V12.6" stroke="#a640b4" stroke-width="1.4"/><ellipse cx="15.5" cy="9.6" rx="2.9" ry="3" fill="none" stroke="#a640b4" stroke-width="1.4"/><path d="M8.4 9.7 Q5.6 11 5.6 14.2 Q6 18.3 10.5 18.4 H14.3 M10.4 14.6 L14.4 18.4 L10.4 22.3" fill="none" stroke="#1a86d0" stroke-width="1.5" stroke-linecap="round" stroke-linejoin="round"/><path d="M22.4 16.2 Q21.5 15.4 20.5 15.5 Q17.5 15.7 17.5 19.2 Q17.6 22.6 20.5 22.7 Q21.6 22.7 22.4 22" fill="none" stroke="#1a86d0" stroke-width="1.4" stroke-linecap="round"/></svg>
<div class="t" style="left:1578.00px;top:142.80px;font-size:15px;line-height:15px;color:#262626;transform:scaleX(0.9630071260256082);transform-origin:left center;">Replace</div>
<svg class="r" style="left:1555px;top:172px;" width="15" height="20" viewBox="0 0 15 20"><path d="M1 1 L13.5 12 H8 L11 18.5 L8.5 19.5 L5.5 13 L1 17 Z" fill="#fff" stroke="#424242" stroke-width="1.2" stroke-linejoin="round"/></svg>
<div class="t" style="left:1578.00px;top:174.30px;font-size:15px;line-height:15px;color:#262626;transform:scaleX(0.9594483172175999);transform-origin:left center;">Select</div>
<svg class="r" style="left:1625px;top:180px;" width="6" height="3.5" viewBox="0 0 6 3.5"><polyline points="0.5,0.5 3.0,3.0 5.5,0.5" fill="none" stroke="#424242" stroke-width="1.2" stroke-linecap="round" stroke-linejoin="round"/></svg>
<svg class="r" style="left:1676px;top:106px;" width="25" height="40" viewBox="0 0 25 40"><rect x="7" y="1.2" width="11" height="25" rx="5.5" fill="#7fbcec" stroke="#2b78c4" stroke-width="1.8"/><path d="M1.5 19.5 Q1.5 30.5 12.5 30.5 Q23.5 30.5 23.5 19.5" fill="none" stroke="#424242" stroke-width="1.8"/><path d="M12.5 30.5 V38" stroke="#424242" stroke-width="1.8"/></svg>
<div class="t" style="left:1665.00px;top:151.65px;font-size:14px;line-height:14px;color:#262626;transform:scaleX(1.0786542640551378);transform-origin:left center;">Dictate</div>
<svg class="r" style="left:1742px;top:106px;" width="40" height="40" viewBox="0 0 40 40"><rect x="21" y="11.2" width="18" height="6.6" rx="3.3" fill="#1f5fc8"/><rect x="15" y="20.3" width="17.6" height="6.3" rx="3.15" fill="#1f5fc8"/><rect x="9" y="29" width="17" height="6.3" rx="3.15" fill="#1f5fc8"/><path d="M22.6 3.2 L29.2 8.2 L9.6 33.8 L1.6 38.6 L2.9 29.3 Z" fill="#f4f4f4" stroke="#1f5fc8" stroke-width="1.6" stroke-linejoin="round"/><path d="M22.6 2.6 L30 8" stroke="#1f5fc8" stroke-width="4" stroke-linecap="round"/><path d="M1.4 38.8 L2.6 32.5 L7 36 Z" fill="#1f5fc8"/></svg>
<div class="t" style="left:1742.00px;top:151.65px;font-size:14px;line-height:14px;color:#262626;transform:scaleX(1.0937086121008606);transform-origin:left center;">Editor</div>
<div class="r" style="left:30px;top:251px;width:1868px;height:1px;background:#d2d2d2;"></div>
<div class="r" style="left:29px;top:222px;width:1px;height:771px;background:#d2d2d2;"></div>
<svg class="r" style="left:10px;top:234px;" width="9" height="9" viewBox="0 0 9 9"><path d="M1.5 0 V7.5 H9" fill="none" stroke="#5a5a5a" stroke-width="2.6"/></svg>
<div class="r" style="left:440px;top:226px;width:1045px;height:18px;background:#ffffff;"></div>
<svg class="r" style="left:0px;top:222px;" width="1920" height="30" viewBox="0 0 1920 30"><rect x="333.15" y="11" width="1.2" height="6" fill="#5c5c5c"/><rect x="343.62" y="13.3" width="1.5" height="1.5" fill="#5c5c5c"/><rect x="354.40" y="11" width="1.2" height="6" fill="#5c5c5c"/><rect x="364.88" y="13.3" width="1.5" height="1.5" fill="#5c5c5c"/><rect x="375.65" y="11" width="1.2" height="6" fill="#5c5c5c"/><rect x="386.12" y="13.3" width="1.5" height="1.5" fill="#5c5c5c"/><rect x="396.90" y="11" width="1.2" height="6" fill="#5c5c5c"/><rect x="407.38" y="13.3" width="1.5" height="1.5" fill="#5c5c5c"/><rect x="418.15" y="11" width="1.2" height="6" fill="#5c5c5c"/><rect x="428.62" y="13.3" width="1.5" height="1.5" fill="#5c5c5c"/><rect x="449.88" y="13.3" width="1.5" height="1.5" fill="#5c5c5c"/><rect x="460.65" y="11" width="1.2" height="6" fill="#5c5c5c"/><rect x="471.12" y="13.3" width="1.5" height="1.5" fill="#5c5c5c"/><rect x="492.38" y="13.3" width="1.5" height="1.5" fill="#5c5c5c"/><rect x="503.15" y="11" width="1.2" height="6" fill="#5c5c5c"/><rect x="513.62" y="13.3" width="1.5" height="1.5" fill="#5c5c5c"/><rect x="534.88" y="13.3" width="1.5" height="1.5" fill="#5c5c5c"/><rect x="545.65" y="11" width="1.2" height="6" fill="#5c5c5c"/><rect x="556.12" y="13.3" width="1.5" height="1.5" fill="#5c5c5c"/><rect x="577.38" y="13.3" width="1.5" height="1.5" fill="#5c5c5c"/><rect x="588.15" y="11" width="1.2" height="6" fill="#5c5c5c"/><rect x="598.62" y="13.3" width="1.5" height="1.5" fill="#5c5c5c"/><rect x="619.88" y="13.3" width="1.5" height="1.5" fill="#5c5c5c"/><rect x="630.65" y="11" width="1.2" height="6" fill="#5c5c5c"/><rect x="641.12" y="13.3" width="1.5" height="1.5" fill="#5c5c5c"/><rect x="662.38" y="13.3" width="1.5" height="1.5" fill="#5c5c5c"/><rect x="673.15" y="11" width="1.2" height="6" fill="#5c5c5c"/><rect x="683.62" y="13.3" width="1.5" height="1.5" fill="#5c5c5c"/><rect x="704.88" y="13.3" width="1.5" height="1.5" fill="#5c5c5c"/><rect x="715.65" y="11" width="1.2" height="6" fill="#5c5c5c"/><rect x="726.12" y="13.3" width="1.5" height="1.5" fill="#5c5c5c"/><rect x="747.38" y="13.3" width="1.5" height="1.5" fill="#5c5c5c"/><rect x="758.15" y="11" width="1.2" height="6" fill="#5c5c5c"/><rect x="768.62" y="13.3" width="1.5" height="1.5" fill="#5c5c5c"/><rect x="789.88" y="13.3" width="1.5" height="1.5" fill="#5c5c5c"/><rect x="800.65" y="11" width="1.2" height="6" fill="#5c5c5c"/><rect x="811.12" y="13.3" width="1.5" height="1.5" fill="#5c5c5c"/><rect x="832.38" y="13.3" width="1.5" height="1.5" fill="#5c5c5c"/><rect x="843.15" y="11" width="1.2" height="6" fill="#5c5c5c"/><rect x="853.62" y="13.3" width="1.5" height="1.5" fill="#5c5c5c"/><rect x="874.88" y="13.3" width="1.5" height="1.5" fill="#5c5c5c"/><rect x="885.65" y="11" width="1.2" height="6" fill="#5c5c5c"/><rect x="896.12" y="13.3" width="1.5" height="1.5" fill="#5c5c5c"/><rect x="917.38" y="13.3" width="1.5" height="1.5" fill="#5c5c5c"/><rect x="928.15" y="11" width="1.2" height="6" fill="#5c5c5c"/><rect x="938.62" y="13.3" width="1.5" height="1.5" fill="#5c5c5c"/><rect x="959.88" y="13.3" width="1.5" height="1.5" fill="#5c5c5c"/><rect x="970.65" y="11" width="1.2" height="6" fill="#5c5c5c"/><rect x="981.12" y="13.3" width="1.5" height="1.5" fill="#5c5c5c"/><rect x="1002.38" y="13.3" width="1.5" height="1.5" fill="#5c5c5c"/><rect x="1013.15" y="11" width="1.2" height="6" fill="#5c5c5c"/><rect x="1023.62" y="13.3" width="1.5" height="1.5" fill="#5c5c5c"/><rect x="1044.88" y="13.3" width="1.5" height="1.5" fill="#5c5c5c"/><rect x="1055.65" y="11" width="1.2" height="6" fill="#5c5c5c"/><rect x="1066.12" y="13.3" width="1.5" height="1.5" fill="#5c5c5c"/><rect x="1087.38" y="13.3" width="1.5" height="1.5" fill="#5c5c5c"/><rect x="1098.15" y="11" width="1.2" height="6" fill="#5c5c5c"/><rect x="1108.62" y="13.3" width="1.5" height="1.5" fill="#5c5c5c"/><rect x="1129.88" y="13.3" width="1.5" height="1.5" fill="#5c5c5c"/><rect x="1140.65" y="11" width="1.2" height="6" fill="#5c5c5c"/><rect x="1151.12" y="13.3" width="1.5" height="1.5" fill="#5c5c5c"/><rect x="1172.38" y="13.3" width="1.5" height="1.5" fill="#5c5c5c"/><rect x="1183.15" y="11" width="1.2" height="6" fill="#5c5c5c"/><rect x="1193.62" y="13.3" width="1.5" height="1.5" fill="#5c5c5c"/><rect x="1214.88" y="13.3" width="1.5" height="1.5" fill="#5c5c5c"/><rect x="1225.65" y="11" width="1.2" height="6" fill="#5c5c5c"/><rect x="1236.12" y="13.3" width="1.5" height="1.5" fill="#5c5c5c"/><rect x="1257.38" y="13.3" width="1.5" height="1.5" fill="#5c5c5c"/><rect x="1268.15" y="11" width="1.2" height="6" fill="#5c5c5c"/><rect x="1278.62" y="13.3" width="1.5" height="1.5" fill="#5c5c5c"/><rect x="1299.88" y="13.3" width="1.5" height="1.5" fill="#5c5c5c"/><rect x="1310.65" y="11" width="1.2" height="6" fill="#5c5c5c"/><rect x="1321.12" y="13.3" width="1.5" height="1.5" fill="#5c5c5c"/><rect x="1342.38" y="13.3" width="1.5" height="1.5" fill="#5c5c5c"/><rect x="1353.15" y="11" width="1.2" height="6" fill="#5c5c5c"/><rect x="1363.62" y="13.3" width="1.5" height="1.5" fill="#5c5c5c"/><rect x="1384.88" y="13.3" width="1.5" height="1.5" fill="#5c5c5c"/><rect x="1395.65" y="11" width="1.2" height="6" fill="#5c5c5c"/><rect x="1406.12" y="13.3" width="1.5" height="1.5" fill="#5c5c5c"/><rect x="1427.38" y="13.3" width="1.5" height="1.5" fill="#5c5c5c"/><rect x="1438.15" y="11" width="1.2" height="6" fill="#5c5c5c"/><rect x="1448.62" y="13.3" width="1.5" height="1.5" fill="#5c5c5c"/><rect x="1469.88" y="13.3" width="1.5" height="1.5" fill="#5c5c5c"/><rect x="1480.65" y="11" width="1.2" height="6" fill="#5c5c5c"/><rect x="1491.12" y="13.3" width="1.5" height="1.5" fill="#5c5c5c"/><rect x="1501.90" y="11" width="1.2" height="6" fill="#5c5c5c"/><rect x="1512.38" y="13.3" width="1.5" height="1.5" fill="#5c5c5c"/><rect x="1523.15" y="11" width="1.2" height="6" fill="#5c5c5c"/><rect x="1533.62" y="13.3" width="1.5" height="1.5" fill="#5c5c5c"/><rect x="1544.40" y="11" width="1.2" height="6" fill="#5c5c5c"/><rect x="1554.88" y="13.3" width="1.5" height="1.5" fill="#5c5c5c"/><rect x="1565.65" y="11" width="1.2" height="6" fill="#5c5c5c"/><rect x="1576.12" y="13.3" width="1.5" height="1.5" fill="#5c5c5c"/><rect x="1586.90" y="11" width="1.2" height="6" fill="#5c5c5c"/></svg>
<div class="t" style="left:482.50px;top:229.40px;font-size:13px;line-height:13px;color:#5a5a5a;transform:translateX(-50%);transform-origin:left center;">1</div>
<div class="t" style="left:525.00px;top:229.40px;font-size:13px;line-height:13px;color:#5a5a5a;transform:translateX(-50%);transform-origin:left center;">2</div>
<div class="t" style="left:567.50px;top:229.40px;font-size:13px;line-height:13px;color:#5a5a5a;transform:translateX(-50%);transform-origin:left center;">3</div>
<div class="t" style="left:610.00px;top:229.40px;font-size:13px;line-height:13px;color:#5a5a5a;transform:translateX(-50%);transform-origin:left center;">4</div>
<div class="t" style="left:652.50px;top:229.40px;font-size:13px;line-height:13px;color:#5a5a5a;transform:translateX(-50%);transform-origin:left center;">5</div>
<div class="t" style="left:695.00px;top:229.40px;font-size:13px;line-height:13px;color:#5a5a5a;transform:translateX(-50%);transform-origin:left center;">6</div>
<div class="t" style="left:737.50px;top:229.40px;font-size:13px;line-height:13px;color:#5a5a5a;transform:translateX(-50%);transform-origin:left center;">7</div>
<div class="t" style="left:780.00px;top:229.40px;font-size:13px;line-height:13px;color:#5a5a5a;transform:translateX(-50%);transform-origin:left center;">8</div>
<div class="t" style="left:822.50px;top:229.40px;font-size:13px;line-height:13px;color:#5a5a5a;transform:translateX(-50%);transform-origin:left center;">9</div>
<div class="t" style="left:865.00px;top:229.40px;font-size:13px;line-height:13px;color:#5a5a5a;transform:translateX(-50%);transform-origin:left center;">10</div>
<div class="t" style="left:907.50px;top:229.40px;font-size:13px;line-height:13px;color:#5a5a5a;transform:translateX(-50%);transform-origin:left center;">11</div>
<div class="t" style="left:950.00px;top:229.40px;font-size:13px;line-height:13px;color:#5a5a5a;transform:translateX(-50%);transform-origin:left center;">12</div>
<div class="t" style="left:992.50px;top:229.40px;font-size:13px;line-height:13px;color:#5a5a5a;transform:translateX(-50%);transform-origin:left center;">13</div>
<div class="t" style="left:1035.00px;top:229.40px;font-size:13px;line-height:13px;color:#5a5a5a;transform:translateX(-50%);transform-origin:left center;">14</div>
<div class="t" style="left:1077.50px;top:229.40px;font-size:13px;line-height:13px;color:#5a5a5a;transform:translateX(-50%);transform-origin:left center;">15</div>
<div class="t" style="left:1120.00px;top:229.40px;font-size:13px;line-height:13px;color:#5a5a5a;transform:translateX(-50%);transform-origin:left center;">16</div>
<div class="t" style="left:1162.50px;top:229.40px;font-size:13px;line-height:13px;color:#5a5a5a;transform:translateX(-50%);transform-origin:left center;">17</div>
<div class="t" style="left:1205.00px;top:229.40px;font-size:13px;line-height:13px;color:#5a5a5a;transform:translateX(-50%);transform-origin:left center;">18</div>
<div class="t" style="left:1247.50px;top:229.40px;font-size:13px;line-height:13px;color:#5a5a5a;transform:translateX(-50%);transform-origin:left center;">19</div>
<div class="t" style="left:1290.00px;top:229.40px;font-size:13px;line-height:13px;color:#5a5a5a;transform:translateX(-50%);transform-origin:left center;">20</div>
<div class="t" style="left:1332.50px;top:229.40px;font-size:13px;line-height:13px;color:#5a5a5a;transform:translateX(-50%);transform-origin:left center;">21</div>
<div class="t" style="left:1375.00px;top:229.40px;font-size:13px;line-height:13px;color:#5a5a5a;transform:translateX(-50%);transform-origin:left center;">22</div>
<div class="t" style="left:1417.50px;top:229.40px;font-size:13px;line-height:13px;color:#5a5a5a;transform:translateX(-50%);transform-origin:left center;">23</div>
<div class="t" style="left:1460.00px;top:229.40px;font-size:13px;line-height:13px;color:#5a5a5a;transform:translateX(-50%);transform-origin:left center;">24</div>
<svg class="r" style="left:358px;top:223px;" width="16" height="30" viewBox="0 0 16 30"><path d="M1.5 1 H14.5 V3 L8 10 L1.5 3 Z" fill="#fff" stroke="#6a6a6a" stroke-width="1"/><path d="M8 12 L14.5 18.5 V22.5 H1.5 V18.5 Z" fill="#fff" stroke="#6a6a6a" stroke-width="1"/><rect x="1.5" y="22.5" width="13" height="6" fill="#fff" stroke="#6a6a6a" stroke-width="1"/></svg>
<svg class="r" style="left:1479px;top:235px;" width="16" height="12" viewBox="0 0 16 12"><path d="M7.5 1 L14.5 7.5 V11 H1 V7.5 Z" fill="#fff" stroke="#6a6a6a" stroke-width="1"/></svg>
<div class="r" style="left:4px;top:380px;width:19px;height:613px;background:#ffffff;"></div>
<svg class="r" style="left:0px;top:0px;" width="30" height="993" viewBox="0 0 30 993"><rect x="12" y="291.60" width="6" height="1.2" fill="#5c5c5c"/><rect x="14.25" y="302.07" width="1.5" height="1.5" fill="#5c5c5c"/><rect x="12" y="312.85" width="6" height="1.2" fill="#5c5c5c"/><rect x="14.25" y="323.32" width="1.5" height="1.5" fill="#5c5c5c"/><rect x="12" y="334.10" width="6" height="1.2" fill="#5c5c5c"/><rect x="14.25" y="344.57" width="1.5" height="1.5" fill="#5c5c5c"/><rect x="12" y="355.35" width="6" height="1.2" fill="#5c5c5c"/><rect x="14.25" y="365.82" width="1.5" height="1.5" fill="#5c5c5c"/><rect x="14.25" y="389.07" width="1.5" height="1.5" fill="#5c5c5c"/><rect x="12" y="399.85" width="6" height="1.2" fill="#5c5c5c"/><rect x="14.25" y="410.32" width="1.5" height="1.5" fill="#5c5c5c"/><rect x="14.25" y="431.57" width="1.5" height="1.5" fill="#5c5c5c"/><rect x="12" y="442.35" width="6" height="1.2" fill="#5c5c5c"/><rect x="14.25" y="452.82" width="1.5" height="1.5" fill="#5c5c5c"/><rect x="14.25" y="474.07" width="1.5" height="1.5" fill="#5c5c5c"/><rect x="12" y="484.85" width="6" height="1.2" fill="#5c5c5c"/><rect x="14.25" y="495.32" width="1.5" height="1.5" fill="#5c5c5c"/><rect x="14.25" y="516.58" width="1.5" height="1.5" fill="#5c5c5c"/><rect x="12" y="527.35" width="6" height="1.2" fill="#5c5c5c"/><rect x="14.25" y="537.83" width="1.5" height="1.5" fill="#5c5c5c"/><rect x="14.25" y="559.08" width="1.5" height="1.5" fill="#5c5c5c"/><rect x="12" y="569.85" width="6" height="1.2" fill="#5c5c5c"/><rect x="14.25" y="580.33" width="1.5" height="1.5" fill="#5c5c5c"/><rect x="14.25" y="601.58" width="1.5" height="1.5" fill="#5c5c5c"/><rect x="12" y="612.35" width="6" height="1.2" fill="#5c5c5c"/><rect x="14.25" y="622.83" width="1.5" height="1.5" fill="#5c5c5c"/><rect x="14.25" y="644.08" width="1.5" height="1.5" fill="#5c5c5c"/><rect x="12" y="654.85" width="6" height="1.2" fill="#5c5c5c"/><rect x="14.25" y="665.33" width="1.5" height="1.5" fill="#5c5c5c"/><rect x="14.25" y="686.58" width="1.5" height="1.5" fill="#5c5c5c"/><rect x="12" y="697.35" width="6" height="1.2" fill="#5c5c5c"/><rect x="14.25" y="707.83" width="1.5" height="1.5" fill="#5c5c5c"/><rect x="14.25" y="729.08" width="1.5" height="1.5" fill="#5c5c5c"/><rect x="12" y="739.85" width="6" height="1.2" fill="#5c5c5c"/><rect x="14.25" y="750.33" width="1.5" height="1.5" fill="#5c5c5c"/><rect x="14.25" y="771.58" width="1.5" height="1.5" fill="#5c5c5c"/><rect x="12" y="782.35" width="6" height="1.2" fill="#5c5c5c"/><rect x="14.25" y="792.83" width="1.5" height="1.5" fill="#5c5c5c"/><rect x="14.25" y="814.08" width="1.5" height="1.5" fill="#5c5c5c"/><rect x="12" y="824.85" width="6" height="1.2" fill="#5c5c5c"/><rect x="14.25" y="835.33" width="1.5" height="1.5" fill="#5c5c5c"/><rect x="14.25" y="856.58" width="1.5" height="1.5" fill="#5c5c5c"/><rect x="12" y="867.35" width="6" height="1.2" fill="#5c5c5c"/><rect x="14.25" y="877.83" width="1.5" height="1.5" fill="#5c5c5c"/><rect x="14.25" y="899.08" width="1.5" height="1.5" fill="#5c5c5c"/><rect x="12" y="909.85" width="6" height="1.2" fill="#5c5c5c"/><rect x="14.25" y="920.33" width="1.5" height="1.5" fill="#5c5c5c"/><rect x="14.25" y="941.58" width="1.5" height="1.5" fill="#5c5c5c"/><rect x="12" y="952.35" width="6" height="1.2" fill="#5c5c5c"/><rect x="14.25" y="962.83" width="1.5" height="1.5" fill="#5c5c5c"/><rect x="14.25" y="984.08" width="1.5" height="1.5" fill="#5c5c5c"/></svg>
<div class="t" style="left:15px;top:421.7px;font-size:12.5px;line-height:12.5px;color:#5a5a5a;transform:translate(-50%,-50%) rotate(-90deg);">1</div>
<div class="t" style="left:15px;top:464.2px;font-size:12.5px;line-height:12.5px;color:#5a5a5a;transform:translate(-50%,-50%) rotate(-90deg);">2</div>
<div class="t" style="left:15px;top:506.7px;font-size:12.5px;line-height:12.5px;color:#5a5a5a;transform:translate(-50%,-50%) rotate(-90deg);">3</div>
<div class="t" style="left:15px;top:549.2px;font-size:12.5px;line-height:12.5px;color:#5a5a5a;transform:translate(-50%,-50%) rotate(-90deg);">4</div>
<div class="t" style="left:15px;top:591.7px;font-size:12.5px;line-height:12.5px;color:#5a5a5a;transform:translate(-50%,-50%) rotate(-90deg);">5</div>
<div class="t" style="left:15px;top:634.2px;font-size:12.5px;line-height:12.5px;color:#5a5a5a;transform:translate(-50%,-50%) rotate(-90deg);">6</div>
<div class="t" style="left:15px;top:676.7px;font-size:12.5px;line-height:12.5px;color:#5a5a5a;transform:translate(-50%,-50%) rotate(-90deg);">7</div>
<div class="t" style="left:15px;top:719.2px;font-size:12.5px;line-height:12.5px;color:#5a5a5a;transform:translate(-50%,-50%) rotate(-90deg);">8</div>
<div class="t" style="left:15px;top:761.7px;font-size:12.5px;line-height:12.5px;color:#5a5a5a;transform:translate(-50%,-50%) rotate(-90deg);">9</div>
<div class="t" style="left:15px;top:804.2px;font-size:12.5px;line-height:12.5px;color:#5a5a5a;transform:translate(-50%,-50%) rotate(-90deg);">10</div>
<div class="t" style="left:15px;top:846.7px;font-size:12.5px;line-height:12.5px;color:#5a5a5a;transform:translate(-50%,-50%) rotate(-90deg);">11</div>
<div class="t" style="left:15px;top:889.2px;font-size:12.5px;line-height:12.5px;color:#5a5a5a;transform:translate(-50%,-50%) rotate(-90deg);">12</div>
<div class="t" style="left:15px;top:931.7px;font-size:12.5px;line-height:12.5px;color:#5a5a5a;transform:translate(-50%,-50%) rotate(-90deg);">13</div>
<div class="t" style="left:15px;top:974.2px;font-size:12.5px;line-height:12.5px;color:#5a5a5a;transform:translate(-50%,-50%) rotate(-90deg);">14</div>
<div class="r" style="left:1899px;top:252px;width:21px;height:740px;background:#f4f4f4;border-radius:10px;"></div>
<svg class="r" style="left:1904px;top:258px;" width="11" height="9" viewBox="0 0 11 9"><path d="M5.5 1 L10 8 H1 Z" fill="#707070" stroke="#707070" stroke-width="1" stroke-linejoin="round"/></svg>
<div class="r" style="left:1904px;top:273px;width:11px;height:556px;background:#707070;border-radius:5.5px;"></div>
<svg class="r" style="left:1904px;top:978px;" width="11" height="9" viewBox="0 0 11 9"><path d="M1 1 H10 L5.5 8 Z" fill="#707070" stroke="#707070" stroke-width="1" stroke-linejoin="round"/></svg>
<div class="r" style="left:0;top:0;width:1920px;height:993px;overflow:hidden;">
<div class="r" style="left:333px;top:271px;width:1262px;height:760px;background:#ffffff;border:1px solid #c8c8c8;"></div>
<svg class="r" style="left:369px;top:379px;" width="3" height="620" viewBox="0 0 3 620"><line x1="1.5" y1="0" x2="1.5" y2="620" stroke="#2b2b2b" stroke-width="2" stroke-dasharray="2.5 2.58"/></svg>
<svg class="r" style="left:1572px;top:379px;" width="3" height="620" viewBox="0 0 3 620"><line x1="1.5" y1="0" x2="1.5" y2="620" stroke="#2b2b2b" stroke-width="2" stroke-dasharray="2.5 2.58"/></svg>
<div class="r" style="left:373px;top:379px;width:1198px;height:1px;background:#f2f2f2;"></div>
<div class="t" style="left:384.00px;top:383.46px;font-size:16px;line-height:16px;color:#252423;transform:scaleX(0.8434158341282193);transform-origin:left center;-webkit-text-stroke:0.35px #252423;">Project</div>
<svg class="r" style="left:585px;top:387px;" width="13" height="8" viewBox="0 0 13 8"><polyline points="0.5,0.5 6.5,7 12.5,0.5" fill="none" stroke="#605e5c" stroke-width="1.1"/></svg>
<div class="r" style="left:381px;top:410px;width:218px;height:36px;background:#ffffff;border:1px solid #e6e6e6;"></div>
<div class="t" style="left:386.50px;top:424.30px;font-size:15px;line-height:15px;color:#605e5c;transform:scaleX(0.8404250572118848);transform-origin:left center;">Multiple selections</div>
<svg class="r" style="left:582px;top:425px;" width="13" height="9" viewBox="0 0 13 9"><polyline points="0.5,0.5 6.5,8 12.5,0.5" fill="none" stroke="#605e5c" stroke-width="1.1"/></svg>
<div class="t" style="left:381.90px;top:537.60px;font-size:16.3px;line-height:16.3px;color:#252423;transform:scaleX(0.7648152933491068);transform-origin:left center;">Project</div>
<div class="t" style="left:447.10px;top:537.60px;font-size:16.3px;line-height:16.3px;color:#252423;transform:scaleX(0.7100900665709438);transform-origin:left center;">Task</div>
<div class="t" style="left:487.00px;top:537.60px;font-size:16.3px;line-height:16.3px;color:#252423;transform:scaleX(0.7624744565383886);transform-origin:left center;">StartDate</div>
<div class="t" style="left:561.80px;top:537.60px;font-size:16.3px;line-height:16.3px;color:#252423;transform:scaleX(0.7472213813299584);transform-origin:left center;">EndDate</div>
<div class="r" style="left:377px;top:568px;width:254px;height:2px;background:#3b8fe6;"></div>
<div class="t" style="left:381.80px;top:575.59px;font-size:16.2px;line-height:16.2px;color:#252423;transform:scaleX(0.754);transform-origin:left center;">Project 01</div>
<div class="t" style="left:447.00px;top:575.59px;font-size:16.2px;line-height:16.2px;color:#252423;transform:scaleX(0.716);transform-origin:left center;">Task1</div>
<div class="t" style="left:486.90px;top:575.59px;font-size:16.2px;line-height:16.2px;color:#252423;transform:scaleX(0.8087);transform-origin:left center;">7/1/2021</div>
<div class="t" style="left:561.70px;top:575.59px;font-size:16.2px;line-height:16.2px;color:#252423;transform:scaleX(0.7918);transform-origin:left center;">12/22/2021</div>
<div class="r" style="left:377px;top:595.27px;width:254px;height:28.2px;background:#eaeaea;"></div>
<div class="t" style="left:381.80px;top:602.96px;font-size:16.2px;line-height:16.2px;color:#252423;transform:scaleX(0.754);transform-origin:left center;">Project 01</div>
<div class="t" style="left:447.00px;top:602.96px;font-size:16.2px;line-height:16.2px;color:#252423;transform:scaleX(0.716);transform-origin:left center;">Task2</div>
<div class="t" style="left:486.90px;top:602.96px;font-size:16.2px;line-height:16.2px;color:#252423;transform:scaleX(0.8087);transform-origin:left center;">9/29/2021</div>
<div class="t" style="left:561.70px;top:602.96px;font-size:16.2px;line-height:16.2px;color:#252423;transform:scaleX(0.7918);transform-origin:left center;">1/11/2022</div>
<div class="t" style="left:381.80px;top:630.34px;font-size:16.2px;line-height:16.2px;color:#252423;transform:scaleX(0.754);transform-origin:left center;">Project 01</div>
<div class="t" style="left:447.00px;top:630.34px;font-size:16.2px;line-height:16.2px;color:#252423;transform:scaleX(0.716);transform-origin:left center;">Task3</div>
<div class="t" style="left:486.90px;top:630.34px;font-size:16.2px;line-height:16.2px;color:#252423;transform:scaleX(0.8087);transform-origin:left center;">4/7/2022</div>
<div class="t" style="left:561.70px;top:630.34px;font-size:16.2px;line-height:16.2px;color:#252423;transform:scaleX(0.7918);transform-origin:left center;">7/29/2022</div>
<div class="r" style="left:377px;top:650.02px;width:254px;height:28.2px;background:#eaeaea;"></div>
<div class="t" style="left:381.80px;top:657.71px;font-size:16.2px;line-height:16.2px;color:#252423;transform:scaleX(0.754);transform-origin:left center;">Project 02</div>
<div class="t" style="left:447.00px;top:657.71px;font-size:16.2px;line-height:16.2px;color:#252423;transform:scaleX(0.716);transform-origin:left center;">Task1</div>
<div class="t" style="left:486.90px;top:657.71px;font-size:16.2px;line-height:16.2px;color:#252423;transform:scaleX(0.8087);transform-origin:left center;">7/1/2021</div>
<div class="t" style="left:561.70px;top:657.71px;font-size:16.2px;line-height:16.2px;color:#252423;transform:scaleX(0.7918);transform-origin:left center;">12/5/2021</div>
<div class="t" style="left:381.80px;top:685.09px;font-size:16.2px;line-height:16.2px;color:#252423;transform:scaleX(0.754);transform-origin:left center;">Project 02</div>
<div class="t" style="left:447.00px;top:685.09px;font-size:16.2px;line-height:16.2px;color:#252423;transform:scaleX(0.716);transform-origin:left center;">Task2</div>
<div class="t" style="left:486.90px;top:685.09px;font-size:16.2px;line-height:16.2px;color:#252423;transform:scaleX(0.8087);transform-origin:left center;">1/7/2022</div>
<div class="t" style="left:561.70px;top:685.09px;font-size:16.2px;line-height:16.2px;color:#252423;transform:scaleX(0.7918);transform-origin:left center;">6/26/2022</div>
<div class="r" style="left:377px;top:704.77px;width:254px;height:28.2px;background:#eaeaea;"></div>
<div class="t" style="left:381.80px;top:712.46px;font-size:16.2px;line-height:16.2px;color:#252423;transform:scaleX(0.754);transform-origin:left center;">Project 02</div>
<div class="t" style="left:447.00px;top:712.46px;font-size:16.2px;line-height:16.2px;color:#252423;transform:scaleX(0.716);transform-origin:left center;">Task3</div>
<div class="t" style="left:486.90px;top:712.46px;font-size:16.2px;line-height:16.2px;color:#252423;transform:scaleX(0.8087);transform-origin:left center;">7/16/2022</div>
<div class="t" style="left:561.70px;top:712.46px;font-size:16.2px;line-height:16.2px;color:#252423;transform:scaleX(0.7918);transform-origin:left center;">1/10/2023</div>
<div class="t" style="left:381.80px;top:739.84px;font-size:16.2px;line-height:16.2px;color:#252423;transform:scaleX(0.754);transform-origin:left center;">Project 03</div>
<div class="t" style="left:447.00px;top:739.84px;font-size:16.2px;line-height:16.2px;color:#252423;transform:scaleX(0.716);transform-origin:left center;">Task1</div>
<div class="t" style="left:486.90px;top:739.84px;font-size:16.2px;line-height:16.2px;color:#252423;transform:scaleX(0.8087);transform-origin:left center;">7/31/2021</div>
<div class="t" style="left:561.70px;top:739.84px;font-size:16.2px;line-height:16.2px;color:#252423;transform:scaleX(0.7918);transform-origin:left center;">2/2/2022</div>
<div class="r" style="left:377px;top:759.52px;width:254px;height:28.2px;background:#eaeaea;"></div>
<div class="t" style="left:381.80px;top:767.21px;font-size:16.2px;line-height:16.2px;color:#252423;transform:scaleX(0.754);transform-origin:left center;">Project 03</div>
<div class="t" style="left:447.00px;top:767.21px;font-size:16.2px;line-height:16.2px;color:#252423;transform:scaleX(0.716);transform-origin:left center;">Task2</div>
<div class="t" style="left:486.90px;top:767.21px;font-size:16.2px;line-height:16.2px;color:#252423;transform:scaleX(0.8087);transform-origin:left center;">10/29/2021</div>
<div class="t" style="left:561.70px;top:767.21px;font-size:16.2px;line-height:16.2px;color:#252423;transform:scaleX(0.7918);transform-origin:left center;">2/10/2022</div>
<div class="t" style="left:381.80px;top:794.59px;font-size:16.2px;line-height:16.2px;color:#252423;transform:scaleX(0.754);transform-origin:left center;">Project 03</div>
<div class="t" style="left:447.00px;top:794.59px;font-size:16.2px;line-height:16.2px;color:#252423;transform:scaleX(0.716);transform-origin:left center;">Task3</div>
<div class="t" style="left:486.90px;top:794.59px;font-size:16.2px;line-height:16.2px;color:#252423;transform:scaleX(0.8087);transform-origin:left center;">1/27/2022</div>
<div class="t" style="left:561.70px;top:794.59px;font-size:16.2px;line-height:16.2px;color:#252423;transform:scaleX(0.7918);transform-origin:left center;">6/18/2022</div>
<div class="r" style="left:377px;top:814.27px;width:254px;height:28.2px;background:#eaeaea;"></div>
<div class="t" style="left:381.80px;top:821.96px;font-size:16.2px;line-height:16.2px;color:#252423;transform:scaleX(0.754);transform-origin:left center;">Project 04</div>
<div class="t" style="left:447.00px;top:821.96px;font-size:16.2px;line-height:16.2px;color:#252423;transform:scaleX(0.716);transform-origin:left center;">Task1</div>
<div class="t" style="left:486.90px;top:821.96px;font-size:16.2px;line-height:16.2px;color:#252423;transform:scaleX(0.8087);transform-origin:left center;">7/1/2021</div>
<div class="t" style="left:561.70px;top:821.96px;font-size:16.2px;line-height:16.2px;color:#252423;transform:scaleX(0.7918);transform-origin:left center;">10/22/2021</div>
<div class="t" style="left:381.80px;top:849.34px;font-size:16.2px;line-height:16.2px;color:#252423;transform:scaleX(0.754);transform-origin:left center;">Project 04</div>
<div class="t" style="left:447.00px;top:849.34px;font-size:16.2px;line-height:16.2px;color:#252423;transform:scaleX(0.716);transform-origin:left center;">Task2</div>
<div class="t" style="left:486.90px;top:849.34px;font-size:16.2px;line-height:16.2px;color:#252423;transform:scaleX(0.8087);transform-origin:left center;">1/7/2022</div>
<div class="t" style="left:561.70px;top:849.34px;font-size:16.2px;line-height:16.2px;color:#252423;transform:scaleX(0.7918);transform-origin:left center;">6/8/2022</div>
<div class="r" style="left:377px;top:869.02px;width:254px;height:28.2px;background:#eaeaea;"></div>
<div class="t" style="left:381.80px;top:876.71px;font-size:16.2px;line-height:16.2px;color:#252423;transform:scaleX(0.754);transform-origin:left center;">Project 04</div>
<div class="t" style="left:447.00px;top:876.71px;font-size:16.2px;line-height:16.2px;color:#252423;transform:scaleX(0.716);transform-origin:left center;">Task3</div>
<div class="t" style="left:486.90px;top:876.71px;font-size:16.2px;line-height:16.2px;color:#252423;transform:scaleX(0.8087);transform-origin:left center;">7/16/2022</div>
<div class="t" style="left:561.70px;top:876.71px;font-size:16.2px;line-height:16.2px;color:#252423;transform:scaleX(0.7918);transform-origin:left center;">12/14/2022</div>
<div class="t" style="left:381.80px;top:904.09px;font-size:16.2px;line-height:16.2px;color:#252423;transform:scaleX(0.754);transform-origin:left center;">Project 05</div>
<div class="t" style="left:447.00px;top:904.09px;font-size:16.2px;line-height:16.2px;color:#252423;transform:scaleX(0.716);transform-origin:left center;">Task1</div>
<div class="t" style="left:486.90px;top:904.09px;font-size:16.2px;line-height:16.2px;color:#252423;transform:scaleX(0.8087);transform-origin:left center;">7/31/2021</div>
<div class="t" style="left:561.70px;top:904.09px;font-size:16.2px;line-height:16.2px;color:#252423;transform:scaleX(0.7918);transform-origin:left center;">11/30/2021</div>
<div class="r" style="left:377px;top:923.77px;width:254px;height:28.2px;background:#eaeaea;"></div>
<div class="t" style="left:381.80px;top:931.46px;font-size:16.2px;line-height:16.2px;color:#252423;transform:scaleX(0.754);transform-origin:left center;">Project 05</div>
<div class="t" style="left:447.00px;top:931.46px;font-size:16.2px;line-height:16.2px;color:#252423;transform:scaleX(0.716);transform-origin:left center;">Task2</div>
<div class="t" style="left:486.90px;top:931.46px;font-size:16.2px;line-height:16.2px;color:#252423;transform:scaleX(0.8087);transform-origin:left center;">10/29/2021</div>
<div class="t" style="left:561.70px;top:931.46px;font-size:16.2px;line-height:16.2px;color:#252423;transform:scaleX(0.7918);transform-origin:left center;">2/21/2022</div>
<div class="t" style="left:381.80px;top:958.84px;font-size:16.2px;line-height:16.2px;color:#252423;transform:scaleX(0.754);transform-origin:left center;">Project 05</div>
<div class="t" style="left:447.00px;top:958.84px;font-size:16.2px;line-height:16.2px;color:#252423;transform:scaleX(0.716);transform-origin:left center;">Task3</div>
<div class="t" style="left:486.90px;top:958.84px;font-size:16.2px;line-height:16.2px;color:#252423;transform:scaleX(0.8087);transform-origin:left center;">5/7/2022</div>
<div class="t" style="left:561.70px;top:958.84px;font-size:16.2px;line-height:16.2px;color:#252423;transform:scaleX(0.7918);transform-origin:left center;">8/24/2022</div>
<div class="r" style="left:377px;top:978.52px;width:254px;height:28.2px;background:#eaeaea;"></div>
<div class="t" style="left:381.80px;top:986.21px;font-size:16.2px;line-height:16.2px;color:#252423;transform:scaleX(0.754);transform-origin:left center;">Project 06</div>
<div class="t" style="left:447.00px;top:986.21px;font-size:16.2px;line-height:16.2px;color:#252423;transform:scaleX(0.716);transform-origin:left center;">Task1</div>
<div class="t" style="left:486.90px;top:986.21px;font-size:16.2px;line-height:16.2px;color:#252423;transform:scaleX(0.8087);transform-origin:left center;">7/31/2021</div>
<div class="t" style="left:561.70px;top:986.21px;font-size:16.2px;line-height:16.2px;color:#252423;transform:scaleX(0.7918);transform-origin:left center;">12/26/2021</div>
<svg class="r" style="left:1471px;top:444px;" width="20" height="23" viewBox="0 0 20 23"><path d="M1 1.2 H19 L12 10.5 V21.5 H8 V10.5 Z" fill="none" stroke="#6b6b6b" stroke-width="1.2" stroke-linejoin="round"/></svg>
<svg class="r" style="left:1504px;top:444px;" width="18" height="20" viewBox="0 0 18 20"><path d="M1 4 H6 M1 4 V19 H17 V8 M1 13 H7 V19" fill="none" stroke="#6b6b6b" stroke-width="1.2"/><path d="M9 10 L16.5 2.5 M12 2 H17 V7" fill="none" stroke="#6b6b6b" stroke-width="1.2"/></svg>
<svg class="r" style="left:1536px;top:451px;" width="18" height="4" viewBox="0 0 18 4"><circle cx="2" cy="2" r="1.4" fill="#555"/><circle cx="9" cy="2" r="1.4" fill="#555"/><circle cx="16" cy="2" r="1.4" fill="#555"/></svg>
<div class="r" style="left:766px;top:471px;width:794px;height:3px;background:#d6d6d6;"></div>
<div class="r" style="left:765px;top:474px;width:1.6px;height:530px;background:#cdcdcd;"></div>
<div class="r" style="left:1559.6px;top:474px;width:1.6px;height:530px;background:#cdcdcd;"></div>
<svg class="r" style="left:764px;top:470px;" width="13" height="16" viewBox="0 0 13 16"><path d="M1.8 16 V1.8 H13" fill="none" stroke="#9c9c9c" stroke-width="3.6"/></svg>
<svg class="r" style="left:1549px;top:470px;" width="13" height="17" viewBox="0 0 13 17"><path d="M0 1.8 H11.2 V17" fill="none" stroke="#9c9c9c" stroke-width="3.6"/></svg>
<div class="r" style="left:1155px;top:471px;width:14px;height:4px;background:#8e8e8e;border-radius:1px;"></div>
<div class="r" style="left:764px;top:852px;width:4px;height:17px;background:#8e8e8e;border-radius:1px;"></div>
<div class="r" style="left:1557px;top:852px;width:4px;height:17px;background:#8e8e8e;border-radius:1px;"></div>
<div class="r" style="left:838px;top:491.8px;width:621px;height:1.2px;background:#e6e6e6;"></div>
<div class="r" style="left:838px;top:505.4px;width:621px;height:1.2px;background:#e2e2e2;"></div>
<div class="r" style="left:833px;top:505.4px;width:5px;height:1.2px;background:#8a8a8a;"></div>
<div class="r" style="left:838px;top:564.6999999999999px;width:621px;height:1.2px;background:#e2e2e2;"></div>
<div class="r" style="left:833px;top:564.6999999999999px;width:5px;height:1.2px;background:#8a8a8a;"></div>
<div class="r" style="left:838px;top:638.3px;width:621px;height:1.2px;background:#e2e2e2;"></div>
<div class="r" style="left:833px;top:638.3px;width:5px;height:1.2px;background:#8a8a8a;"></div>
<div class="r" style="left:838px;top:711.9px;width:621px;height:1.2px;background:#e2e2e2;"></div>
<div class="r" style="left:833px;top:711.9px;width:5px;height:1.2px;background:#8a8a8a;"></div>
<div class="r" style="left:838px;top:784.6999999999999px;width:621px;height:1.2px;background:#e2e2e2;"></div>
<div class="r" style="left:833px;top:784.6999999999999px;width:5px;height:1.2px;background:#8a8a8a;"></div>
<div class="r" style="left:838px;top:858.1px;width:621px;height:1.2px;background:#e2e2e2;"></div>
<div class="r" style="left:833px;top:858.1px;width:5px;height:1.2px;background:#8a8a8a;"></div>
<div class="r" style="left:838px;top:932.0px;width:621px;height:1.2px;background:#e2e2e2;"></div>
<div class="r" style="left:833px;top:932.0px;width:5px;height:1.2px;background:#8a8a8a;"></div>
<div class="r" style="left:837.6px;top:492px;width:1.5px;height:455.5px;background:#a6a6a6;"></div>
<div class="r" style="left:838px;top:945.6px;width:621px;height:2px;background:#a6a6a6;"></div>
<div class="r" style="left:837.5px;top:946.5px;width:1.4px;height:6.5px;background:#8a8a8a;"></div>
<div class="t" style="left:838.20px;top:955.84px;font-size:12px;line-height:12px;color:#333333;transform:scaleX(0.86);transform-origin:left center;">Jul21</div>
<div class="r" style="left:871.95px;top:946.5px;width:1.4px;height:6.5px;background:#8a8a8a;"></div>
<div class="r" style="left:906.41px;top:946.5px;width:1.4px;height:6.5px;background:#8a8a8a;"></div>
<div class="t" style="left:907.11px;top:955.84px;font-size:12px;line-height:12px;color:#333333;transform:translateX(-50%) scaleX(0.86);transform-origin:left center;transform-origin:center;">Sep21</div>
<div class="r" style="left:939.75px;top:946.5px;width:1.4px;height:6.5px;background:#8a8a8a;"></div>
<div class="r" style="left:974.2px;top:946.5px;width:1.4px;height:6.5px;background:#8a8a8a;"></div>
<div class="t" style="left:974.90px;top:955.84px;font-size:12px;line-height:12px;color:#333333;transform:translateX(-50%) scaleX(0.86);transform-origin:left center;transform-origin:center;">Nov21</div>
<div class="r" style="left:1007.54px;top:946.5px;width:1.4px;height:6.5px;background:#8a8a8a;"></div>
<div class="r" style="left:1042.0px;top:946.5px;width:1.4px;height:6.5px;background:#8a8a8a;"></div>
<div class="t" style="left:1042.70px;top:955.84px;font-size:12px;line-height:12px;color:#333333;transform:translateX(-50%) scaleX(0.86);transform-origin:left center;transform-origin:center;">Jan22</div>
<div class="r" style="left:1076.45px;top:946.5px;width:1.4px;height:6.5px;background:#8a8a8a;"></div>
<div class="r" style="left:1107.57px;top:946.5px;width:1.4px;height:6.5px;background:#8a8a8a;"></div>
<div class="t" style="left:1108.27px;top:955.84px;font-size:12px;line-height:12px;color:#333333;transform:translateX(-50%) scaleX(0.86);transform-origin:left center;transform-origin:center;">Mar22</div>
<div class="r" style="left:1142.02px;top:946.5px;width:1.4px;height:6.5px;background:#8a8a8a;"></div>
<div class="r" style="left:1175.37px;top:946.5px;width:1.4px;height:6.5px;background:#8a8a8a;"></div>
<div class="t" style="left:1176.07px;top:955.84px;font-size:12px;line-height:12px;color:#333333;transform:translateX(-50%) scaleX(0.86);transform-origin:left center;transform-origin:center;">May22</div>
<div class="r" style="left:1209.82px;top:946.5px;width:1.4px;height:6.5px;background:#8a8a8a;"></div>
<div class="r" style="left:1243.16px;top:946.5px;width:1.4px;height:6.5px;background:#8a8a8a;"></div>
<div class="t" style="left:1243.86px;top:955.84px;font-size:12px;line-height:12px;color:#333333;transform:translateX(-50%) scaleX(0.86);transform-origin:left center;transform-origin:center;">Jul22</div>
<div class="r" style="left:1277.61px;top:946.5px;width:1.4px;height:6.5px;background:#8a8a8a;"></div>
<div class="r" style="left:1312.07px;top:946.5px;width:1.4px;height:6.5px;background:#8a8a8a;"></div>
<div class="t" style="left:1312.77px;top:955.84px;font-size:12px;line-height:12px;color:#333333;transform:translateX(-50%) scaleX(0.86);transform-origin:left center;transform-origin:center;">Sep22</div>
<div class="r" style="left:1345.41px;top:946.5px;width:1.4px;height:6.5px;background:#8a8a8a;"></div>
<div class="r" style="left:1379.86px;top:946.5px;width:1.4px;height:6.5px;background:#8a8a8a;"></div>
<div class="t" style="left:1380.56px;top:955.84px;font-size:12px;line-height:12px;color:#333333;transform:translateX(-50%) scaleX(0.86);transform-origin:left center;transform-origin:center;">Nov22</div>
<div class="r" style="left:1413.21px;top:946.5px;width:1.4px;height:6.5px;background:#8a8a8a;"></div>
<div class="r" style="left:1447.66px;top:946.5px;width:1.4px;height:6.5px;background:#8a8a8a;"></div>
<div class="t" style="left:1448.36px;top:955.84px;font-size:12px;line-height:12px;color:#333333;transform:translateX(-50%) scaleX(0.86);transform-origin:left center;transform-origin:center;">Jan23</div>
<div class="t" style="left:789.50px;top:530.14px;font-size:12px;line-height:12px;color:#333333;transform:scaleX(0.7680918008513788);transform-origin:left center;">Project 01</div>
<div class="t" style="left:789.50px;top:603.54px;font-size:12px;line-height:12px;color:#333333;transform:scaleX(0.7680918008513788);transform-origin:left center;">Project 02</div>
<div class="t" style="left:789.50px;top:676.94px;font-size:12px;line-height:12px;color:#333333;transform:scaleX(0.7680918008513788);transform-origin:left center;">Project 03</div>
<div class="t" style="left:789.50px;top:750.34px;font-size:12px;line-height:12px;color:#333333;transform:scaleX(0.7680918008513788);transform-origin:left center;">Project 04</div>
<div class="t" style="left:789.50px;top:823.74px;font-size:12px;line-height:12px;color:#333333;transform:scaleX(0.7680918008513788);transform-origin:left center;">Project 05</div>
<div class="t" style="left:789.50px;top:897.14px;font-size:12px;line-height:12px;color:#333333;transform:scaleX(0.7680918008513788);transform-origin:left center;">Project 06</div>
<div class="t" style="left:780.4px;top:719.3px;font-size:12px;line-height:12px;font-weight:700;color:#1a1a1a;letter-spacing:1.27px;transform:translate(-50%,-50%) rotate(-90deg);">Project</div>
<div class="r" style="left:838.2px;top:506.0px;width:193.38px;height:19.8px;background:#a4b9d5;border-radius:9.9px;"></div>
<div class="t" style="left:843.20px;top:507.83px;font-size:14.5px;line-height:14.5px;color:#1e1e1e;transform:scaleX(0.6731965077931158);transform-origin:left center;-webkit-text-stroke:0.15px #1e1e1e;">Task1</div>
<div class="r" style="left:938.23px;top:525.8px;width:115.59px;height:19.8px;background:#f7c18c;border-radius:9.9px;"></div>
<div class="t" style="left:943.23px;top:527.63px;font-size:14.5px;line-height:14.5px;color:#1e1e1e;transform:scaleX(0.6731965077931158);transform-origin:left center;-webkit-text-stroke:0.15px #1e1e1e;">Task2</div>
<div class="r" style="left:1149.39px;top:545.6px;width:125.59px;height:19.8px;background:#f0a9aa;border-radius:9.9px;"></div>
<div class="t" style="left:1154.39px;top:547.43px;font-size:14.5px;line-height:14.5px;color:#1e1e1e;transform:scaleX(0.6731965077931158);transform-origin:left center;-webkit-text-stroke:0.15px #1e1e1e;">Task3</div>
<div class="r" style="left:838.2px;top:579.4px;width:174.49px;height:19.8px;background:#a4b9d5;border-radius:9.9px;"></div>
<div class="t" style="left:843.20px;top:581.23px;font-size:14.5px;line-height:14.5px;color:#1e1e1e;transform:scaleX(0.6731965077931158);transform-origin:left center;-webkit-text-stroke:0.15px #1e1e1e;">Task1</div>
<div class="r" style="left:1049.37px;top:599.2px;width:188.94px;height:19.8px;background:#f7c18c;border-radius:9.9px;"></div>
<div class="t" style="left:1054.37px;top:601.03px;font-size:14.5px;line-height:14.5px;color:#1e1e1e;transform:scaleX(0.6731965077931158);transform-origin:left center;-webkit-text-stroke:0.15px #1e1e1e;">Task2</div>
<div class="r" style="left:1260.53px;top:619.0px;width:197.83px;height:19.8px;background:#f0a9aa;border-radius:9.9px;"></div>
<div class="t" style="left:1265.53px;top:620.83px;font-size:14.5px;line-height:14.5px;color:#1e1e1e;transform:scaleX(0.6731965077931158);transform-origin:left center;-webkit-text-stroke:0.15px #1e1e1e;">Task3</div>
<div class="r" style="left:871.54px;top:652.8px;width:206.72px;height:19.8px;background:#a4b9d5;border-radius:9.9px;"></div>
<div class="t" style="left:876.54px;top:654.63px;font-size:14.5px;line-height:14.5px;color:#1e1e1e;transform:scaleX(0.6731965077931158);transform-origin:left center;-webkit-text-stroke:0.15px #1e1e1e;">Task1</div>
<div class="r" style="left:971.57px;top:672.6px;width:115.59px;height:19.8px;background:#f7c18c;border-radius:9.9px;"></div>
<div class="t" style="left:976.57px;top:674.43px;font-size:14.5px;line-height:14.5px;color:#1e1e1e;transform:scaleX(0.6731965077931158);transform-origin:left center;-webkit-text-stroke:0.15px #1e1e1e;">Task2</div>
<div class="r" style="left:1071.59px;top:692.4px;width:157.82px;height:19.8px;background:#f0a9aa;border-radius:9.9px;"></div>
<div class="t" style="left:1076.59px;top:694.23px;font-size:14.5px;line-height:14.5px;color:#1e1e1e;transform:scaleX(0.6731965077931158);transform-origin:left center;-webkit-text-stroke:0.15px #1e1e1e;">Task3</div>
<div class="r" style="left:838.2px;top:726.2px;width:125.59px;height:19.8px;background:#a4b9d5;border-radius:9.9px;"></div>
<div class="t" style="left:843.20px;top:728.03px;font-size:14.5px;line-height:14.5px;color:#1e1e1e;transform:scaleX(0.6731965077931158);transform-origin:left center;-webkit-text-stroke:0.15px #1e1e1e;">Task1</div>
<div class="r" style="left:1049.37px;top:746.0px;width:168.93px;height:19.8px;background:#f7c18c;border-radius:9.9px;"></div>
<div class="t" style="left:1054.37px;top:747.83px;font-size:14.5px;line-height:14.5px;color:#1e1e1e;transform:scaleX(0.6731965077931158);transform-origin:left center;-webkit-text-stroke:0.15px #1e1e1e;">Task2</div>
<div class="r" style="left:1260.53px;top:765.8px;width:167.82px;height:19.8px;background:#f0a9aa;border-radius:9.9px;"></div>
<div class="t" style="left:1265.53px;top:767.63px;font-size:14.5px;line-height:14.5px;color:#1e1e1e;transform:scaleX(0.6731965077931158);transform-origin:left center;-webkit-text-stroke:0.15px #1e1e1e;">Task3</div>
<div class="r" style="left:871.54px;top:799.6px;width:135.59px;height:19.8px;background:#a4b9d5;border-radius:9.9px;"></div>
<div class="t" style="left:876.54px;top:801.43px;font-size:14.5px;line-height:14.5px;color:#1e1e1e;transform:scaleX(0.6731965077931158);transform-origin:left center;-webkit-text-stroke:0.15px #1e1e1e;">Task1</div>
<div class="r" style="left:971.57px;top:819.4px;width:127.81px;height:19.8px;background:#f7c18c;border-radius:9.9px;"></div>
<div class="t" style="left:976.57px;top:821.23px;font-size:14.5px;line-height:14.5px;color:#1e1e1e;transform:scaleX(0.6731965077931158);transform-origin:left center;-webkit-text-stroke:0.15px #1e1e1e;">Task2</div>
<div class="r" style="left:1182.73px;top:839.2px;width:121.14px;height:19.8px;background:#f0a9aa;border-radius:9.9px;"></div>
<div class="t" style="left:1187.73px;top:841.03px;font-size:14.5px;line-height:14.5px;color:#1e1e1e;transform:scaleX(0.6731965077931158);transform-origin:left center;-webkit-text-stroke:0.15px #1e1e1e;">Task3</div>
<div class="r" style="left:871.54px;top:873.0px;width:164.49px;height:19.8px;background:#a4b9d5;border-radius:9.9px;"></div>
<div class="t" style="left:876.54px;top:874.83px;font-size:14.5px;line-height:14.5px;color:#1e1e1e;transform:scaleX(0.6731965077931158);transform-origin:left center;-webkit-text-stroke:0.15px #1e1e1e;">Task1</div>
<div class="r" style="left:1082.71px;top:892.8px;width:148.93px;height:19.8px;background:#f7c18c;border-radius:9.9px;"></div>
<div class="t" style="left:1087.71px;top:894.63px;font-size:14.5px;line-height:14.5px;color:#1e1e1e;transform:scaleX(0.6731965077931158);transform-origin:left center;-webkit-text-stroke:0.15px #1e1e1e;">Task2</div>
<div class="r" style="left:1182.73px;top:912.6px;width:108.92px;height:19.8px;background:#f0a9aa;border-radius:9.9px;"></div>
<div class="t" style="left:1187.73px;top:914.43px;font-size:14.5px;line-height:14.5px;color:#1e1e1e;transform:scaleX(0.6731965077931158);transform-origin:left center;-webkit-text-stroke:0.15px #1e1e1e;">Task3</div>
<svg class="r" style="left:1042px;top:492px;" width="2" height="455" viewBox="0 0 2 455"><line x1="1" y1="0" x2="1" y2="455" stroke="#5a5a5a" stroke-width="1.7" stroke-dasharray="5 5"/></svg>
<div class="r" style="left:1204.2px;top:491.3px;width:52.6px;height:450.3px;background:linear-gradient(#d2d2d2,#c6c6c6);border:1px solid #a2a2a2;"></div>
<div class="t" style="left:1215.60px;top:692.06px;font-size:16px;line-height:16px;color:#111111;transform:scaleX(0.93);transform-origin:left center;">holi</div>
<div class="t" style="left:1215.60px;top:712.86px;font-size:16px;line-height:16px;color:#111111;transform:scaleX(0.93);transform-origin:left center;">day</div>
<div class="r" style="left:1418.4px;top:491px;width:3.6px;height:455.5px;background:#ff0000;"></div>
<div class="t" style="left:1500.20px;top:513.89px;font-size:11px;line-height:11px;color:#333333;transform:scaleX(0.86);transform-origin:left center;">sk1</div>
<div class="t" style="left:1500.20px;top:530.49px;font-size:11px;line-height:11px;color:#333333;transform:scaleX(0.86);transform-origin:left center;">sk2</div>
<div class="t" style="left:1500.20px;top:547.99px;font-size:11px;line-height:11px;color:#333333;transform:scaleX(0.86);transform-origin:left center;">sk3</div>
<div class="r" style="left:1445.5px;top:495.5px;width:2px;height:450px;background:#c9cdd3;"></div>
<div class="r" style="left:1447.3px;top:495.5px;width:53.1px;height:450.5px;background:#4472c4;"></div>
<div class="r" style="left:1475.5px;top:493px;width:5.5px;height:1.4px;background:#111;border-radius:1px;"></div>
<div class="r" style="left:1477.6px;top:493px;width:1.3px;height:2.6px;background:#111;"></div>
<div class="r" style="left:1493.2px;top:493px;width:1.3px;height:2.6px;background:#333;"></div>
<div class="r" style="left:1482px;top:495.2px;width:14px;height:0.8px;background:#444;"></div>
<div class="t" style="left:1459.60px;top:695.66px;font-size:16px;line-height:16px;color:#ffffff;transform:scaleX(0.93);transform-origin:left center;">Buff</div>
<div class="t" style="left:1459.60px;top:717.56px;font-size:16px;line-height:16px;color:#ffffff;transform:scaleX(0.93);transform-origin:left center;">er</div>
</div>
<div class="r" style="left:0px;top:993px;width:1920px;height:27px;background:#f3f3f3;"></div>
<div class="r" style="left:0px;top:993px;width:1920px;height:1px;background:#fbfbfb;"></div>
<div class="t" style="left:9.30px;top:1000.50px;font-size:13px;line-height:13px;color:#262626;transform:scaleX(0.9804649501637712);transform-origin:left center;">Page 1 of 1</div>
<div class="t" style="left:101.00px;top:1000.50px;font-size:13px;line-height:13px;color:#262626;transform:scaleX(1.0325060927470566);transform-origin:left center;">2 words</div>
<svg class="r" style="left:172px;top:999px;" width="18" height="16" viewBox="0 0 18 16"><path d="M1 1.5 Q5 0.5 8.5 2.5 V14.5 Q5 12.5 1 13.5 Z M8.5 2.5 Q12 0.5 16 1.5 V8" fill="none" stroke="#424242" stroke-width="1.2" stroke-linejoin="round"/><path d="M10 11 L12.5 14 L17 8.5" fill="none" stroke="#424242" stroke-width="1.3"/></svg>
<div class="t" style="left:211.00px;top:1000.50px;font-size:13px;line-height:13px;color:#262626;transform:scaleX(0.9688825770546402);transform-origin:left center;">English (Israel)</div>
<svg class="r" style="left:320px;top:998px;" width="19" height="18" viewBox="0 0 19 18"><rect x="1" y="2" width="16" height="13" fill="none" stroke="#424242" stroke-width="1.2"/><path d="M1 4.5 H17" stroke="#424242" stroke-width="1.2"/><path d="M3 7.5 H6 M3 10 H5.5 M3 12.5 H5.5" stroke="#424242" stroke-width="1"/><circle cx="12" cy="11.5" r="4.5" fill="#f3f3f3" stroke="#424242" stroke-width="1.2"/><circle cx="12" cy="11.5" r="2" fill="#424242"/></svg>
<svg class="r" style="left:359px;top:997px;" width="20" height="20" viewBox="0 0 20 20"><circle cx="8.5" cy="3" r="2" fill="none" stroke="#424242" stroke-width="1.1"/><path d="M1.3 5.6 Q1.6 4.4 2.8 4.7 Q8.5 6.6 14.2 4.7 Q15.4 4.4 15.7 5.6 Q15.8 6.6 14.8 7 L11.2 8.4 V11.5 L10.5 13 M5.8 8.4 L2.2 7 Q1.2 6.6 1.3 5.6 M5.8 8.4 V11.5 L3.8 16.6 Q3.6 18 5 18.2 Q5.8 18.2 6.2 17.2 L8.5 12.5 L9.6 14.4" fill="none" stroke="#424242" stroke-width="1.1" stroke-linejoin="round"/><path d="M11.5 11.5 L18.2 18.2 M18.2 11.5 L11.5 18.2" stroke="#424242" stroke-width="1.1"/></svg>
<div class="t" style="left:382.00px;top:1000.50px;font-size:13px;line-height:13px;color:#262626;transform:scaleX(0.9794625598440312);transform-origin:left center;">Accessibility: Investigate</div>
<svg class="r" style="left:1479px;top:998px;" width="19" height="18" viewBox="0 0 19 18"><path d="M1 5 V1 H5 M14 1 H18 V5 M18 13 V17 H14 M5 17 H1 V13" fill="none" stroke="#424242" stroke-width="1.2"/><path d="M5.5 3.5 H10.5 L13.5 6.5 V14.5 H5.5 Z M10.5 3.5 V6.5 H13.5" fill="none" stroke="#424242" stroke-width="1.1"/></svg>
<div class="t" style="left:1500.00px;top:1000.50px;font-size:13px;line-height:13px;color:#262626;transform:scaleX(0.9321334469076737);transform-origin:left center;">Focus</div>
<svg class="r" style="left:1563px;top:998px;" width="19" height="17" viewBox="0 0 19 17"><path d="M1 2 H8 Q9.5 2 9.5 3.5 V16 Q9.5 14.5 8 14.5 H1 Z M18 2 H11 Q9.5 2 9.5 3.5 V16 Q9.5 14.5 11 14.5 H18 Z" fill="none" stroke="#424242" stroke-width="1.1" stroke-linejoin="round"/><path d="M3 5.5 H7.5 M3 8 H7.5 M3 10.5 H7.5 M11.5 5.5 H16 M11.5 8 H16 M11.5 10.5 H16" stroke="#424242" stroke-width="1"/></svg>
<div class="r" style="left:1598px;top:993px;width:50px;height:27px;background:#e0e0e0;"></div>
<svg class="r" style="left:1614px;top:998px;" width="17" height="18" viewBox="0 0 17 18"><rect x="1" y="1" width="15" height="16" rx="1" fill="none" stroke="#424242" stroke-width="1.2"/><path d="M4 4.5 H13 M4 7 H13 M4 9.5 H13 M4 12 H13 M4 14.5 H13" stroke="#424242" stroke-width="1"/></svg>
<svg class="r" style="left:1664px;top:998px;" width="19" height="19" viewBox="0 0 19 19"><path d="M11 15.5 H1 V1 H15.5 V8" fill="none" stroke="#424242" stroke-width="1.2"/><path d="M1 3.5 H15.5 M3.5 6 H7 M3.5 8.5 H7 M3.5 11 H7" stroke="#424242" stroke-width="1"/><circle cx="13.5" cy="13.5" r="4.8" fill="#f3f3f3" stroke="#424242" stroke-width="1.1"/><path d="M8.7 13.5 H18.3 M13.5 8.7 V18.3" stroke="#424242" stroke-width="0.9"/><ellipse cx="13.5" cy="13.5" rx="2" ry="4.8" fill="none" stroke="#424242" stroke-width="0.9"/></svg>
<div class="r" style="left:1705px;top:1006.5px;width:9px;height:1.2px;background:#424242;"></div>
<div class="r" style="left:1721px;top:1006.6px;width:125px;height:1px;background:#8a8a8a;"></div>
<div class="r" style="left:1774px;top:1000px;width:4.5px;height:14px;background:#606060;border-radius:1px;"></div>
<div class="r" style="left:1783.5px;top:1002px;width:1px;height:10px;background:#8a8a8a;"></div>
<svg class="r" style="left:1852px;top:1001px;" width="11" height="11" viewBox="0 0 11 11"><path d="M5.5 0.5 V10.5 M0.5 5.5 H10.5" stroke="#424242" stroke-width="1.2"/></svg>
<div class="t" style="left:1878.00px;top:1000.50px;font-size:13px;line-height:13px;color:#262626;transform:scaleX(0.9607878460337477);transform-origin:left center;">90%</div>
<div class="r" style="left:0px;top:1020px;width:1920px;height:60px;background:#d9d9d9;"></div>
<div class="r" style="left:0px;top:1020px;width:1920px;height:1px;background:#cfcfcf;"></div>
<svg class="r" style="left:26px;top:1039px;" width="31" height="21" viewBox="0 0 31 21"><defs><linearGradient id="cl" x1="0" y1="0" x2="0" y2="1"><stop offset="0" stop-color="#a9c9f5"/><stop offset="1" stop-color="#6b9be8"/></linearGradient></defs><path d="M5 20 Q0 20 0.5 15 Q1 10.5 6 10.5 Q7 3 14 3 Q20 3 22 8.5 Q30 8 30.5 14.5 Q30.5 20 25 20 Z" fill="url(#cl)"/><path d="M4 19 Q2 15 6 13 Q12 12 15 14 Q20 10 27 14" fill="none" stroke="#d7e6fb" stroke-width="1" opacity="0.8"/></svg>
<div class="t" style="left:65.50px;top:1034.15px;font-size:14px;line-height:14px;color:#1a1a1a;transform:scaleX(0.9110889110889111);transform-origin:left center;">14°C</div>
<div class="t" style="left:97.00px;top:1053.30px;font-size:15px;line-height:15px;color:#4a4a4a;transform:translateX(-100%);transform-origin:left center;direction:rtl;">מעונן</div>
<svg class="r" style="left:577px;top:1036px;" width="30" height="30" viewBox="0 0 30 30"><defs><linearGradient id="wn" x1="0" y1="0" x2="1" y2="1"><stop offset="0" stop-color="#4cc2ff"/><stop offset="1" stop-color="#0f6fd6"/></linearGradient></defs><rect x="0" y="0" width="14" height="14" rx="1.5" fill="url(#wn)"/><rect x="15.5" y="0" width="14" height="14" rx="1.5" fill="url(#wn)"/><rect x="0" y="15.5" width="14" height="14" rx="1.5" fill="url(#wn)"/><rect x="15.5" y="15.5" width="14" height="14" rx="1.5" fill="url(#wn)"/></svg>
<div class="r" style="left:624px;top:1031px;width:124px;height:38px;background:#f2f2f2;border-radius:19px;border:1px solid #e0e0e0;"></div>
<svg class="r" style="left:652px;top:1041px;" width="18" height="18" viewBox="0 0 18 18"><circle cx="11" cy="7" r="5.5" fill="none" stroke="#1a1a1a" stroke-width="1.7"/><path d="M7 11 L1.5 16.5" stroke="#1a1a1a" stroke-width="1.9" stroke-linecap="round"/></svg>
<div class="t" style="left:676.00px;top:1043.88px;font-size:15.5px;line-height:15.5px;color:#1a1a1a;transform:scaleX(0.9060700009067063);transform-origin:left center;">Search</div>
<svg class="r" style="left:765px;top:1036px;" width="30" height="29" viewBox="0 0 30 29"><rect x="9" y="0.5" width="20" height="19" rx="1.5" fill="#f4f4f4" stroke="#e6e6e6"/><rect x="0.5" y="8" width="20" height="20" rx="1.5" fill="#222"/><rect x="9" y="8" width="11.5" height="11.5" fill="#b8b8b8"/></svg>
<svg class="r" style="left:820px;top:1036px;" width="29" height="29" viewBox="0 0 29 29"><defs><linearGradient id="tm" x1="0" y1="0" x2="1" y2="1"><stop offset="0" stop-color="#8a7fe0"/><stop offset="1" stop-color="#5b4fc4"/></linearGradient></defs><path d="M14.5 0.5 A14 14 0 1 1 6 26 L1 28.5 L2.5 22.5 A14 14 0 0 1 14.5 0.5 Z" fill="url(#tm)"/><rect x="7" y="9" width="11" height="10" rx="2" fill="#fff"/><path d="M18 12.5 L22.5 10 V18 L18 15.5 Z" fill="#fff"/></svg>
<svg class="r" style="left:875px;top:1035px;" width="30" height="30" viewBox="0 0 30 30"><defs><linearGradient id="eg" x1="0.1" y1="0.9" x2="0.9" y2="0.15"><stop offset="0" stop-color="#0a6ccc"/><stop offset="0.5" stop-color="#1aa0e0"/><stop offset="1" stop-color="#5ad462"/></linearGradient><linearGradient id="eg2" x1="0" y1="0" x2="1" y2="1"><stop offset="0" stop-color="#0c5fb8"/><stop offset="1" stop-color="#114a8f"/></linearGradient></defs><circle cx="15" cy="15" r="15" fill="url(#eg)"/><path d="M18.5 17.5 Q24.5 19.2 30.2 17 V24 Q27 22.2 24 22.6 Q21 22.5 18.5 17.5 Z" fill="#d9d9d9"/><path d="M8.2 12.5 Q5.8 22 13.2 26.6 Q20.5 30.2 27.6 22.6 Q22 25.8 17 23.4 Q11.6 20.6 13.6 14.6 Q11 11.2 8.2 12.5 Z" fill="url(#eg2)"/><ellipse cx="16" cy="14.4" rx="3.3" ry="2.7" fill="#d9d9d9"/></svg>
<svg class="r" style="left:930px;top:1037px;" width="30" height="27" viewBox="0 0 30 27"><path d="M0.5 3 Q0.5 0.5 3 0.5 H11 L14 3.5 H27 Q29.5 3.5 29.5 6 V8 H0.5 Z" fill="#e8a400"/><rect x="0.5" y="6" width="29" height="20.5" rx="1.5" fill="#ffd35a"/><rect x="8" y="18" width="14" height="8.5" rx="1" fill="#1f7ad6"/><rect x="11" y="20.5" width="8" height="1.6" fill="#fff"/></svg>
<div class="r" style="left:941px;top:1070.5px;width:8px;height:3px;background:#6b6b6b;border-radius:1.5px;"></div>
<svg class="r" style="left:985px;top:1035px;" width="30" height="31" viewBox="0 0 30 31"><path d="M9 6 V2.5 Q9 1 10.5 1 H19.5 Q21 1 21 2.5 V6" fill="none" stroke="#3fb6f0" stroke-width="1.8"/><rect x="0.5" y="5" width="29" height="25.5" rx="3" fill="#1b4f95"/><rect x="10" y="12" width="4.5" height="4.5" fill="#f25022"/><rect x="15.5" y="12" width="4.5" height="4.5" fill="#7fba00"/><rect x="10" y="17.5" width="4.5" height="4.5" fill="#00a4ef"/><rect x="15.5" y="17.5" width="4.5" height="4.5" fill="#ffb900"/></svg>
<svg class="r" style="left:1040px;top:1036px;" width="30" height="28" viewBox="0 0 30 28"><path d="M0 9 L15 0 L30 9 V28 H0 Z" fill="#0a64c9"/><path d="M4 6 H26 V14 L15 21 L4 14 Z" fill="#f4f4f4"/><path d="M0 9 L15 19 L30 9 V28 H0 Z" fill="#28a8ea"/><path d="M0 28 L15 17 L30 28 Z" fill="#50c0f5"/></svg>
<svg class="r" style="left:1094px;top:1027px;" width="40" height="40" viewBox="0 0 40 40"><path d="M16 23 L3 15.5 A15 15 0 0 1 29 15.5 Z" fill="#e94235"/><path d="M16 23 L29 15.5 A15 15 0 0 1 16 38 Z" fill="#fbbc04"/><path d="M16 23 L16 38 A15 15 0 0 1 3 15.5 Z" fill="#34a853"/><circle cx="16" cy="23" r="7" fill="#fff"/><circle cx="16" cy="23" r="5.6" fill="#4285f4"/><circle cx="28" cy="10.5" r="9.6" fill="#3367d6" stroke="#cfcfcf" stroke-width="0.8"/><path d="M23.5 8.5 Q26.5 8.5 28 12.5 Q29.5 8.5 32.5 8.5 Q31.5 13 28 15 Q24.5 13 23.5 8.5 Z" fill="#f28b82"/></svg>
<div class="r" style="left:1106px;top:1071px;width:8px;height:3px;background:#6b6b6b;border-radius:1.5px;"></div>
<svg class="r" style="left:1150px;top:1038px;" width="27" height="27" viewBox="0 0 27 27"><rect x="3" y="2" width="23" height="24" rx="1" fill="#b5d8f0"/><rect x="0.5" y="0.5" width="23" height="24" rx="1" fill="#8ec9f0"/><circle cx="12" cy="12.5" r="7.8" fill="#f07b1f"/><path d="M9.5 8.5 L16.5 12.5 L9.5 16.5 Z" fill="#fff"/></svg>
<div class="r" style="left:1161px;top:1071px;width:8px;height:3px;background:#6b6b6b;border-radius:1.5px;"></div>
<svg class="r" style="left:1205px;top:1035px;" width="30" height="30" viewBox="0 0 30 30"><rect x="0" y="0" width="30" height="30" fill="#404040"/><rect x="6" y="14" width="6" height="11" fill="#e6b936"/><rect x="11" y="9" width="6" height="16" fill="#f2c811"/><rect x="16" y="5" width="7" height="20" fill="#d9a21b"/></svg>
<div class="r" style="left:1216px;top:1071px;width:8px;height:3px;background:#6b6b6b;border-radius:1.5px;"></div>
<svg class="r" style="left:1260px;top:1036px;" width="30" height="28" viewBox="0 0 30 28"><rect x="6" y="0" width="23.5" height="28" rx="1.5" fill="#107c41"/><rect x="17" y="0" width="12.5" height="7" fill="#33c481"/><rect x="17" y="7" width="12.5" height="7" fill="#21a366"/><rect x="6" y="14" width="23.5" height="7" fill="#185c37"/><rect x="0" y="6" width="15" height="15" rx="1.5" fill="#107c41"/><text x="7.5" y="17.8" font-family="Liberation Sans" font-weight="700" font-size="11" fill="#fff" text-anchor="middle">X</text></svg>
<div class="r" style="left:1271px;top:1071px;width:8px;height:3px;background:#6b6b6b;border-radius:1.5px;"></div>
<div class="r" style="left:1349px;top:1028px;width:4px;height:46px;background:#e8e8e8;border-radius:0 4px 4px 0;"></div>
<div class="r" style="left:1306px;top:1026px;width:44px;height:48px;background:#efefef;border-radius:5px;"></div>
<svg class="r" style="left:1315px;top:1036px;" width="30" height="28" viewBox="0 0 30 28"><rect x="6" y="0" width="23.5" height="28" rx="1.5" fill="#185abd"/><rect x="6" y="0" width="23.5" height="7" rx="1.5" fill="#41a5ee"/><rect x="6" y="7" width="23.5" height="7" fill="#2b7cd3"/><rect x="6" y="14" width="23.5" height="7" fill="#185abd"/><rect x="6" y="21" width="23.5" height="7" rx="1" fill="#103f91"/><rect x="0" y="6" width="15" height="15" rx="1.5" fill="#185abd"/><text x="7.5" y="17.8" font-family="Liberation Sans" font-weight="700" font-size="11" fill="#fff" text-anchor="middle">W</text></svg>
<div class="r" style="left:1320px;top:1070.5px;width:20px;height:3.5px;background:#3a3a3a;border-radius:2px;"></div>
<svg class="r" style="left:1542px;top:1046px;" width="18" height="10" viewBox="0 0 18 10"><polyline points="1,9 9,1.5 17,9" fill="none" stroke="#1a1a1a" stroke-width="1.3"/></svg>
<svg class="r" style="left:1571px;top:1042px;" width="21" height="14" viewBox="0 0 21 14"><path d="M4.5 13 Q0.5 13 0.8 9.5 Q1 6.5 4.5 6.5 Q6 1 11 1 Q15.5 1 17 5.5 Q20.5 6 20.5 9.5 Q20.5 13 17 13 Z" fill="#f2f2f2" stroke="#2a2a2a" stroke-width="1.2"/><path d="M2 11 Q8 7 11 9 Q15 6 20 10" fill="none" stroke="#8a8a8a" stroke-width="1"/></svg>
<svg class="r" style="left:1600px;top:1039px;" width="24" height="21" viewBox="0 0 24 21"><path d="M2.5 9 A8 8 0 0 1 16.5 4.5 M16.5 1 V5 H12.5" fill="none" stroke="#1a1a1a" stroke-width="1.3"/><path d="M2.5 11.5 A8 8 0 0 0 6 18 M2.5 19.5 L6 18.5 L5.5 15" fill="none" stroke="#1a1a1a" stroke-width="1.3"/><circle cx="17" cy="16" r="4.5" fill="#0a6bd6"/></svg>
<div class="t" style="left:1640.00px;top:1044.73px;font-size:14.5px;line-height:14.5px;color:#1a1a1a;transform:scaleX(0.9070091819761761);transform-origin:left center;">ENG</div>
<svg class="r" style="left:1690px;top:1042px;" width="22" height="16" viewBox="0 0 22 16"><path d="M1 5.5 Q11 -3 21 5.5 M4 8.5 Q11 2 18 8.5 M7 11.5 Q11 7.5 15 11.5" fill="none" stroke="#1a1a1a" stroke-width="1.4"/><circle cx="11" cy="14" r="1.5" fill="#1a1a1a"/></svg>
<svg class="r" style="left:1720px;top:1042px;" width="21" height="16" viewBox="0 0 21 16"><path d="M1 5 H4 L9 1 V15 L4 11 H1 Z" fill="none" stroke="#1a1a1a" stroke-width="1.2" stroke-linejoin="round"/><path d="M13 5 L19 11 M19 5 L13 11" stroke="#1a1a1a" stroke-width="1.2"/></svg>
<svg class="r" style="left:1750px;top:1040px;" width="22" height="18" viewBox="0 0 22 18"><path d="M3 1 V4 M6.5 1 V4 M1.5 4 H8 V7 Q8 9 4.75 9 Q1.5 9 1.5 7 Z" fill="#1a1a1a"/><rect x="5" y="6.5" width="14" height="10" rx="1.5" fill="none" stroke="#1a1a1a" stroke-width="1.3"/><rect x="7" y="8.5" width="10" height="6" fill="#1a1a1a"/><rect x="19.5" y="9.5" width="2" height="4" fill="#1a1a1a"/></svg>
<div class="t" style="left:1838.00px;top:1032.73px;font-size:14.5px;line-height:14.5px;color:#1a1a1a;transform:scaleX(0.9566702560255554);transform-origin:left center;">4:58</div>
<div class="t" style="left:1790.00px;top:1052.73px;font-size:14.5px;line-height:14.5px;color:#1a1a1a;transform:scaleX(1.0334493093113781);transform-origin:left center;">07/12/2022</div>
<div class="r" style="left:1875px;top:1040px;width:21px;height:21px;background:#3b3b3b;border-radius:50%;"></div>
<div class="t" style="left:1885.50px;top:1044.50px;font-size:13px;line-height:13px;color:#ffffff;transform:translateX(-50%);transform-origin:left center;">2</div></body></html>
